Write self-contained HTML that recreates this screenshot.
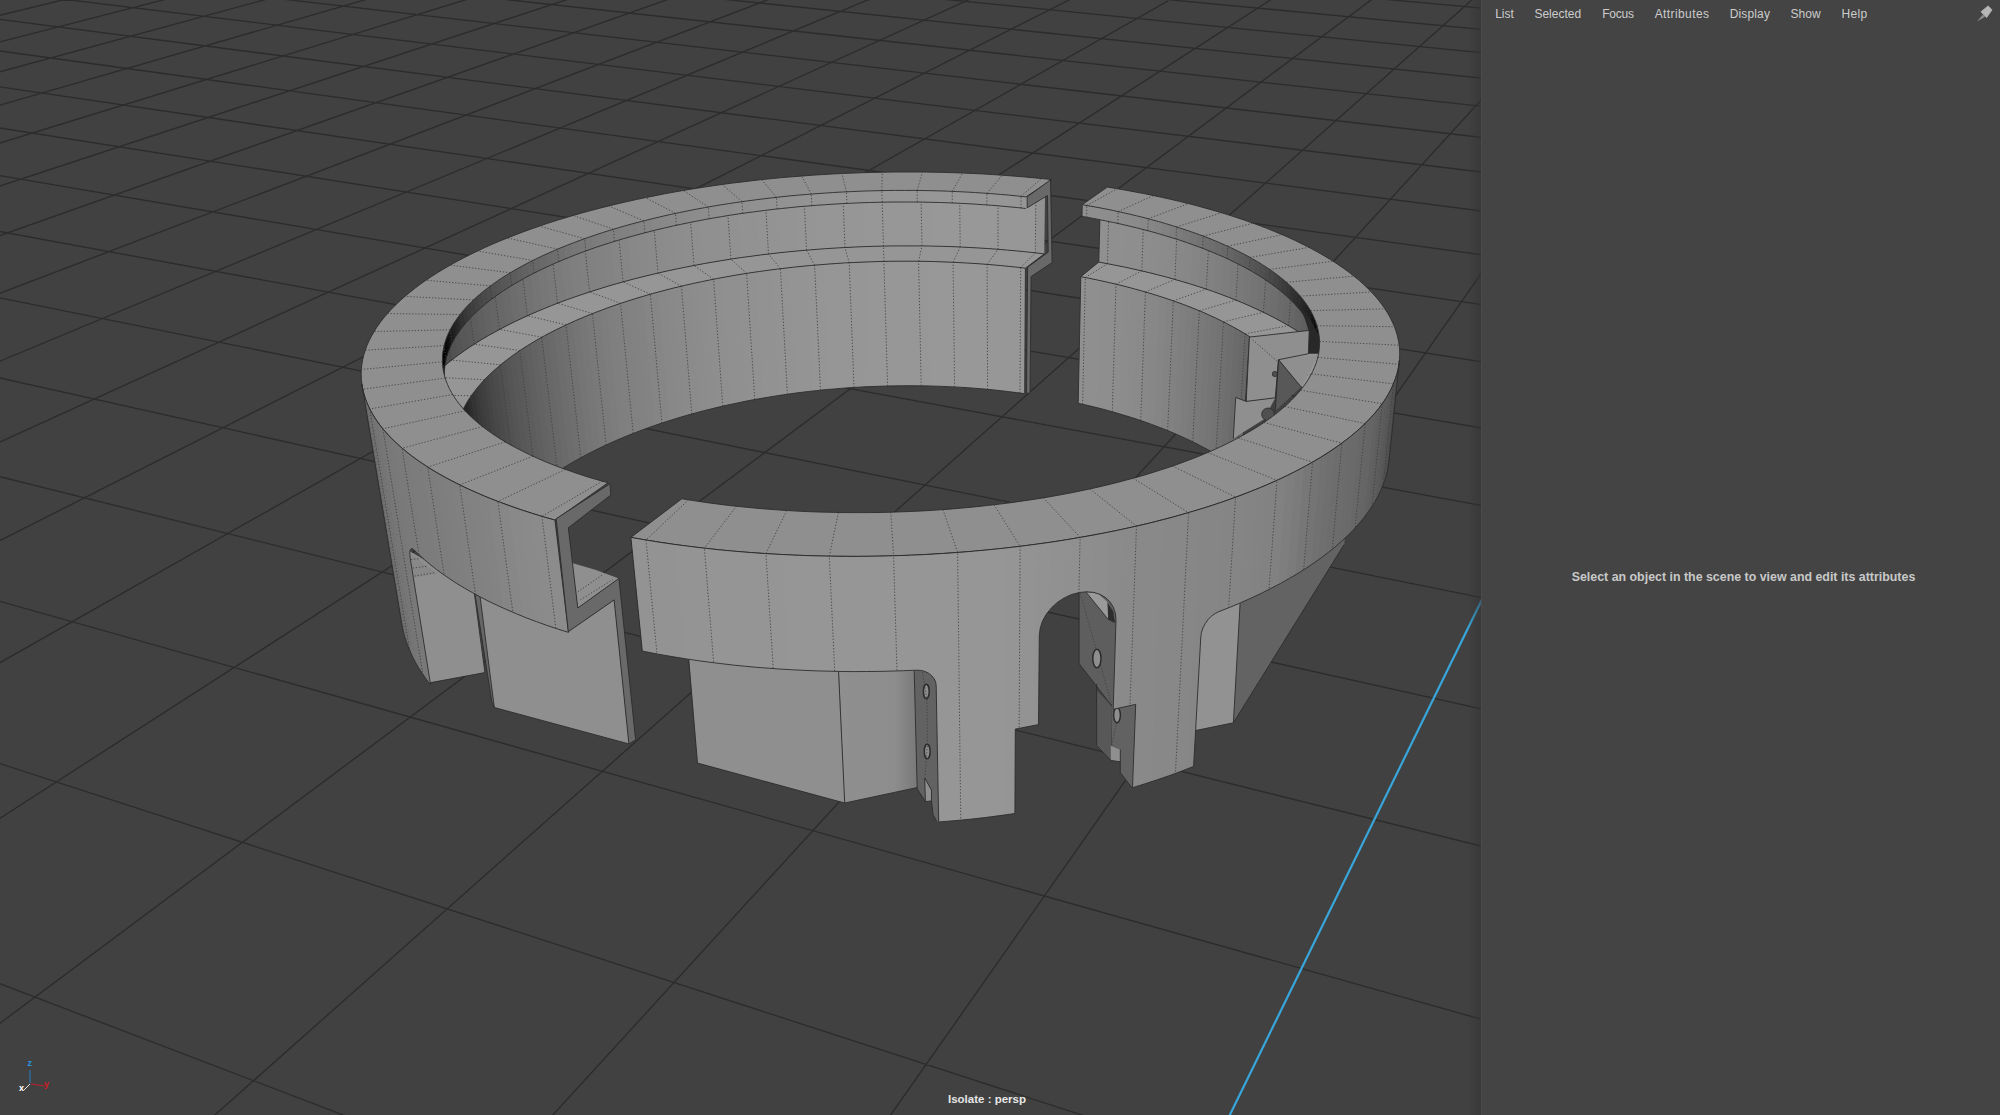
<!DOCTYPE html>
<html><head><meta charset="utf-8"><title>Maya</title>
<style>
html,body{margin:0;padding:0;background:#444;}
body{width:2000px;height:1115px;position:relative;overflow:hidden;font-family:"Liberation Sans",sans-serif;}
#vp{position:absolute;left:0;top:0;width:2000px;height:1115px;background:#414141;}
#panel{position:absolute;left:1481px;top:0;width:519px;height:1115px;background:#444444;border-left:1px solid #4b4b4b;box-sizing:border-box;}
#shade{position:absolute;left:1467px;top:0;width:14px;height:1115px;background:linear-gradient(to right,rgba(50,50,50,0),rgba(50,50,50,0.55));}
#menu{position:absolute;left:-1px;top:7px;height:18px;font-size:12px;color:#cccccc;white-space:nowrap;}
#menu span{position:absolute;top:0;}
#msg{position:absolute;left:2px;width:519px;top:570px;text-align:center;font-size:12.4px;font-weight:bold;color:#c8c8c8;}
#iso{position:absolute;left:948px;top:1093px;font-size:11.5px;font-weight:bold;color:#e6e6e6;}
.e{fill:none;stroke:#2c2c2c;stroke-width:.9}
.d{fill:none;stroke:#404040;stroke-opacity:.85;stroke-width:1;stroke-dasharray:1.3 1.8}
</style></head><body>
<svg id="vp" width="2000" height="1115" viewBox="0 0 2000 1115">
<g stroke="#2c2c2c" stroke-width="1.35" fill="none">
<path d="M-52.2,-39.5 L16.8,-54 M-64.6,-16.4 L108.7,-54.6 M-78.4,9.3 L200.3,-55.3 M-51.8,27.9 L291.6,-55.9 M-66.2,58.9 L382.7,-56.5 M-82.5,94.1 L447.7,-50 M-51.2,119.9 L539.8,-50.6 M-68.4,164 L631.7,-51.3 M-88.4,215.1 L723.4,-51.9 M-50.4,253.4 L814.7,-52.5 M-71.7,320.7 L905.9,-53.1 M-97.5,401.7 L996.7,-53.7 M-129.1,501 L1087.3,-54.4 M-77.2,579.6 L1177.7,-55 M-113.3,726.8 L1267.8,-55.6 M-161.1,922 L1357.6,-56.2 M-88,1088.9 L1447.2,-56.8 M137.5,1183.6 L1528.6,-50.3 M498.5,1174.4 L1619.2,-51 M855.4,1165.2 L1709.5,-51.6 M1526.5,1259.4 L1889.5,-52.8 M1895.9,1249.2 L1979,-53.4 M-65.6,958.6 L498.5,1174.4 M-113.3,726.8 L1362.6,1206.2 M-77.2,579.6 L2076.5,1187.2 M-112.4,448.7 L2068.2,992.5 M-84,359.2 L2061.7,838.6 M-60.6,285.6 L2056.4,714 M-88.4,215.1 L2052,611 M-68.4,164 L2157.3,543 M-51.2,119.9 L2145.9,466.5 M-74.1,76 L2136.1,400.8 M-58.8,42.9 L2127.6,343.6 M-78.4,9.3 L2120.1,293.5 M-64.6,-16.4 L2113.5,249.1 M-52.2,-39.5 L2107.6,209.6 M46.3,-50.8 L2102.4,174.2 M231.2,-52 L2097.6,142.3 M447.7,-50 L2093.3,113.4 M631.7,-51.3 L2089.4,87.1 M814.7,-52.5 L2085.8,63 M1033.9,-50.5 L2082.5,40.9 M1216.2,-51.7 L2079.5,20.6 M1397.4,-53 L2076.7,1.8 M1619.2,-51 L2074.1,-15.6 M1799.6,-52.2 L2071.7,-31.8"/>
</g>
<path d="M1152.8,1269.7 L1799.6,-52.2" stroke="#38a6da" stroke-width="2.2" fill="none" transform="translate(1.3,0)"/>
<defs><linearGradient id="gf2" gradientUnits="userSpaceOnUse" x1="840" y1="0" x2="918" y2="0"><stop offset="0" stop-color="#8f8f8f"/><stop offset="0.7" stop-color="#8d8d8d"/><stop offset="1" stop-color="#787878"/></linearGradient></defs>
<g id="model">
<polygon points="1024.7,393.7 1018.6,392.8 1019.2,267.5 1025.4,268.2" fill="#979797"/>
<polygon points="1020,393 1010.5,391.8 1010.9,266.6 1020.7,267.6" fill="#979797"/>
<polygon points="1012,392 1002.4,390.9 1002.5,265.7 1012.3,266.7" fill="#979797"/>
<polygon points="1003.9,391 994.3,390 994.1,265 1004,265.9" fill="#979797"/>
<polygon points="995.7,390.1 986.1,389.2 985.6,264.3 995.6,265.1" fill="#979797"/>
<polygon points="987.6,389.3 977.9,388.5 977.2,263.6 987.1,264.4" fill="#989898"/>
<polygon points="979.4,388.6 969.7,387.9 968.6,263.1 978.7,263.7" fill="#989898"/>
<polygon points="971.1,388 961.4,387.3 960.1,262.6 970.2,263.2" fill="#989898"/>
<polygon points="962.9,387.4 953.1,386.9 951.5,262.2 961.6,262.7" fill="#989898"/>
<polygon points="954.6,386.9 944.8,386.5 942.9,261.9 953.1,262.3" fill="#989898"/>
<polygon points="946.2,386.5 936.4,386.2 934.3,261.6 944.5,261.9" fill="#989898"/>
<polygon points="937.9,386.2 928.1,385.9 925.7,261.4 935.9,261.6" fill="#989898"/>
<polygon points="929.6,386 919.7,385.8 917.1,261.3 927.2,261.4" fill="#979797"/>
<polygon points="921.2,385.8 911.3,385.7 908.4,261.2 918.6,261.3" fill="#979797"/>
<polygon points="912.8,385.7 902.9,385.8 899.7,261.2 909.9,261.2" fill="#979797"/>
<polygon points="904.4,385.7 894.5,385.8 891.1,261.3 901.3,261.2" fill="#979797"/>
<polygon points="896,385.8 886.1,386 882.4,261.5 892.6,261.3" fill="#979797"/>
<polygon points="887.6,386 877.7,386.3 873.7,261.7 883.9,261.4" fill="#979797"/>
<polygon points="879.2,386.2 869.3,386.6 865,262 875.2,261.6" fill="#979797"/>
<polygon points="870.8,386.6 860.9,387 856.3,262.4 866.6,261.9" fill="#969696"/>
<polygon points="862.4,387 852.5,387.5 847.7,262.8 857.9,262.3" fill="#969696"/>
<polygon points="854,387.4 844.1,388.1 839,263.3 849.2,262.7" fill="#969696"/>
<polygon points="845.6,388 835.7,388.8 830.4,263.9 840.6,263.2" fill="#969696"/>
<polygon points="837.2,388.7 827.4,389.5 821.7,264.6 831.9,263.8" fill="#969696"/>
<polygon points="828.9,389.4 819,390.3 813.1,265.3 823.3,264.4" fill="#959595"/>
<polygon points="820.5,390.2 810.7,391.2 804.5,266.1 814.6,265.1" fill="#959595"/>
<polygon points="812.2,391.1 802.4,392.2 795.9,266.9 806,265.9" fill="#949494"/>
<polygon points="803.9,392 794.2,393.3 787.4,267.9 797.5,266.8" fill="#949494"/>
<polygon points="795.6,393.1 785.9,394.4 778.9,268.9 788.9,267.7" fill="#939393"/>
<polygon points="787.4,394.2 777.7,395.6 770.4,270 780.4,268.7" fill="#939393"/>
<polygon points="779.2,395.4 769.6,397 761.9,271.1 771.9,269.8" fill="#929292"/>
<polygon points="771,396.7 761.4,398.3 753.5,272.3 763.4,270.9" fill="#929292"/>
<polygon points="762.9,398.1 753.3,399.8 745.2,273.6 755,272.1" fill="#919191"/>
<polygon points="754.8,399.5 745.3,401.3 736.8,275 746.6,273.4" fill="#919191"/>
<polygon points="746.7,401.1 737.3,403 728.6,276.4 738.3,274.7" fill="#909090"/>
<polygon points="738.7,402.7 729.3,404.7 720.3,277.9 730,276.2" fill="#909090"/>
<polygon points="730.7,404.3 721.4,406.4 712.1,279.5 721.8,277.7" fill="#8f8f8f"/>
<polygon points="722.8,406.1 713.6,408.3 704,281.1 713.6,279.2" fill="#8e8e8e"/>
<polygon points="715,408 705.8,410.2 696,282.9 705.5,280.8" fill="#8d8d8d"/>
<polygon points="707.2,409.9 698.1,412.2 688,284.6 697.4,282.5" fill="#8c8c8c"/>
<polygon points="699.5,411.9 690.4,414.3 680,286.5 689.4,284.3" fill="#8b8b8b"/>
<polygon points="691.8,414 682.9,416.5 672.2,288.4 681.4,286.2" fill="#8a8a8a"/>
<polygon points="684.2,416.1 675.3,418.8 664.4,290.4 673.5,288.1" fill="#898989"/>
<polygon points="676.7,418.4 667.9,421.1 656.6,292.5 665.7,290" fill="#888888"/>
<polygon points="669.2,420.7 660.6,423.5 649,294.6 658,292.1" fill="#868686"/>
<polygon points="661.9,423.1 653.3,426 641.5,296.8 650.4,294.2" fill="#858585"/>
<polygon points="654.6,425.5 646.1,428.5 634,299.1 642.8,296.4" fill="#838383"/>
<polygon points="647.4,428.1 639,431.2 626.6,301.4 635.3,298.7" fill="#828282"/>
<polygon points="640.3,430.7 632,433.9 619.3,303.8 627.9,301" fill="#818181"/>
<polygon points="633.2,433.4 625.1,436.7 612.2,306.3 620.6,303.4" fill="#808080"/>
<polygon points="626.3,436.2 618.3,439.5 605.1,308.8 613.4,305.8" fill="#7f7f7f"/>
<polygon points="619.5,439 611.6,442.5 598.1,311.4 606.3,308.4" fill="#7d7d7d"/>
<polygon points="612.8,442 605,445.5 591.2,314.1 599.3,311" fill="#7b7b7b"/>
<polygon points="606.2,445 598.5,448.6 584.5,316.8 592.5,313.6" fill="#797979"/>
<polygon points="599.7,448 592.2,451.7 577.9,319.6 585.7,316.3" fill="#777777"/>
<polygon points="593.3,451.2 585.9,455 571.4,322.5 579,319.1" fill="#757575"/>
<polygon points="587,454.4 579.8,458.3 565,325.4 572.5,322" fill="#727272"/>
<polygon points="580.9,457.7 573.8,461.7 558.7,328.4 566.1,324.9" fill="#6f6f6f"/>
<polygon points="574.9,461.1 568,465.1 552.6,331.5 559.8,327.9" fill="#6d6d6d"/>
<polygon points="569,464.5 562.3,468.6 546.6,334.6 553.7,330.9" fill="#6a6a6a"/>
<polygon points="563.3,468 556.7,472.2 540.8,337.8 547.7,334.1" fill="#686868"/>
<polygon points="557.7,471.6 551.3,475.9 535.1,341.1 541.8,337.2" fill="#656565"/>
<polygon points="552.2,475.2 546,479.6 529.6,344.4 536.1,340.5" fill="#636363"/>
<polygon points="546.9,478.9 540.9,483.4 524.2,347.7 530.6,343.8" fill="#606060"/>
<polygon points="541.8,482.7 535.9,487.2 519,351.1 525.2,347.1" fill="#5d5d5d"/>
<polygon points="536.8,486.5 531.1,491.1 513.9,354.6 519.9,350.5" fill="#5a5a5a"/>
<polygon points="532,490.4 526.5,495.1 509.1,358.2 514.8,354" fill="#585858"/>
<polygon points="527.3,494.4 522,499.1 504.4,361.8 509.9,357.5" fill="#555555"/>
<polygon points="522.8,498.4 517.7,503.2 499.9,365.4 505.2,361.1" fill="#525252"/>
<polygon points="518.5,502.5 513.6,507.4 495.5,369.1 500.6,364.8" fill="#4e4e4e"/>
<polygon points="514.4,506.6 509.7,511.6 491.4,372.9 496.3,368.5" fill="#4b4b4b"/>
<polygon points="510.4,510.9 506,515.9 487.4,376.7 492.1,372.2" fill="#484848"/>
<polygon points="506.7,515.1 502.5,520.2 483.7,380.5 488.1,376" fill="#444444"/>
<polygon points="503.1,519.4 499.1,524.6 480.1,384.4 484.3,379.8" fill="#404040"/>
<polygon points="499.7,523.8 496,529 476.8,388.4 480.7,383.7" fill="#3d3d3d"/>
<polygon points="496.5,528.2 493.1,533.5 473.7,392.4 477.4,387.7" fill="#393939"/>
<polygon points="493.6,532.7 490.4,538 470.8,396.4 474.2,391.7" fill="#333333"/>
<polygon points="490.8,537.2 487.9,542.5 468.1,400.5 471.3,395.7" fill="#2e2e2e"/>
<polygon points="488.3,541.7 485.6,547.1 465.6,404.6 468.5,399.7" fill="#282828"/>
<polygon points="486,546.3 483.6,551.8 463.4,408.7 466.1,403.9" fill="#232323"/>
<polygon points="483.9,551 481.8,556.5 461.4,412.9 463.8,408" fill="#1d1d1d"/>
<polygon points="482.1,555.6 480.2,561.2 459.7,417.1 461.8,412.2" fill="#171717"/>
<polygon points="480.4,560.4 478.8,565.9 458.2,421.4 460,416.4" fill="#111111"/>
<polygon points="479.1,565.1 477.7,570.7 457,425.7 458.5,420.6" fill="#0b0b0b"/>
<polygon points="477.9,569.9 476.9,575.5 456,430 457.2,424.9" fill="#070707"/>
<polygon points="477,574.7 476.3,580.4 455.3,434.3 456.1,429.2" fill="#040404"/>
<polygon points="476.4,579.5 475.9,585.2 454.8,438.7 455.4,433.5" fill="#000000"/>
<polygon points="476,584.4 475.9,590.1 454.6,443 454.9,437.9" fill="#000000"/>
<polygon points="475.9,589.2 476,595 454.7,447.4 454.6,442.3" fill="#000000"/>
<polygon points="476,594.1 476.5,599.9 455.1,451.8 454.7,446.6" fill="#000000"/>
<polygon points="476.4,599 477.2,604.8 455.7,456.2 455,451" fill="#000000"/>
<polygon points="477.1,603.9 477.6,606.8 456,458 455.6,455.4" fill="#000000"/>
<polyline class="d" points="1020,393 1020.7,267.6"/>
<polyline class="d" points="987.6,389.3 987.1,264.4"/>
<polyline class="d" points="954.6,386.9 953.1,262.3"/>
<polyline class="d" points="921.2,385.8 918.6,261.3"/>
<polyline class="d" points="887.6,386 883.9,261.4"/>
<polyline class="d" points="854,387.4 849.2,262.7"/>
<polyline class="d" points="820.5,390.2 814.6,265.1"/>
<polyline class="d" points="787.4,394.2 780.4,268.7"/>
<polyline class="d" points="754.8,399.5 746.6,273.4"/>
<polyline class="d" points="722.8,406.1 713.6,279.2"/>
<polyline class="d" points="691.8,414 681.4,286.2"/>
<polyline class="d" points="661.9,423.1 650.4,294.2"/>
<polyline class="d" points="633.2,433.4 620.6,303.4"/>
<polyline class="d" points="606.2,445 592.5,313.6"/>
<polyline class="d" points="580.9,457.7 566.1,324.9"/>
<polyline class="d" points="557.7,471.6 541.8,337.2"/>
<polyline class="d" points="536.8,486.5 519.9,350.5"/>
<polyline class="d" points="518.5,502.5 500.6,364.8"/>
<polyline class="d" points="503.1,519.4 484.3,379.8"/>
<polyline class="d" points="490.8,537.2 471.3,395.7"/>
<polyline class="d" points="482.1,555.6 461.8,412.2"/>
<polyline class="d" points="477,574.7 456.1,429.2"/>
<polyline class="d" points="476,594.1 454.7,446.6"/>
<polyline class="e" points="1024.7,393.7 1016.6,392.6 1008.5,391.6 1000.4,390.6 992.2,389.8 984,389 975.8,388.3 967.5,387.7 959.2,387.2 950.9,386.8 942.6,386.4 934.2,386.1 925.8,385.9 917.5,385.8 909,385.7 900.6,385.8 892.2,385.9 883.8,386.1 875.4,386.4 867,386.7 858.5,387.2 850.1,387.7 841.7,388.3 833.4,389 825,389.7 816.7,390.6 808.3,391.5 800,392.5 791.8,393.6 783.5,394.8 775.3,396 767.1,397.4 759,398.8 750.9,400.2 742.9,401.8 734.9,403.5 726.9,405.2 719,407 711.2,408.9 703.4,410.8 695.7,412.9 688,415 680.5,417.2 673,419.5 665.5,421.9 658.2,424.3 651,426.8 643.8,429.4 636.7,432.1 629.7,434.8 622.8,437.6 616.1,440.5 609.4,443.5 602.8,446.5 596.4,449.6 590.1,452.8 583.9,456.1 577.8,459.4 571.8,462.8 566,466.3 560.3,469.9 554.8,473.5 549.4,477.2 544.2,480.9 539.1,484.7 534.2,488.6 529.5,492.5 524.9,496.5 520.5,500.6 516.2,504.7 512.2,508.9 508.3,513.2 504.7,517.5 501.2,521.8 498,526.2 494.9,530.7 492,535.1 489.4,539.7 487,544.3 484.8,548.9 482.9,553.6 481.1,558.3 479.6,563 478.4,567.8 477.4,572.6 476.6,577.4 476.1,582.3 475.9,587.1 475.9,592 476.2,596.9 476.7,601.8 477.6,606.8"/>
<polygon points="1241,470.9 1235.8,467.2 1244.2,333.3 1249.6,336.6" fill="#666666"/>
<polygon points="1236.7,467.8 1230.8,463.7 1239,330.2 1245.1,333.9" fill="#696969"/>
<polygon points="1231.7,464.3 1225.6,460.3 1233.6,327.2 1239.9,330.8" fill="#6b6b6b"/>
<polygon points="1226.6,460.9 1220.3,456.9 1228,324.2 1234.6,327.7" fill="#6e6e6e"/>
<polygon points="1221.3,457.5 1214.8,453.6 1222.3,321.3 1229,324.7" fill="#707070"/>
<polygon points="1215.8,454.2 1209.2,450.4 1216.5,318.5 1223.4,321.8" fill="#737373"/>
<polygon points="1210.2,451 1203.5,447.3 1210.5,315.7 1217.6,319" fill="#757575"/>
<polygon points="1204.5,447.9 1197.6,444.2 1204.4,313 1211.6,316.2" fill="#777777"/>
<polygon points="1198.7,444.8 1191.6,441.3 1198.2,310.3 1205.5,313.4" fill="#797979"/>
<polygon points="1192.7,441.8 1185.5,438.4 1191.8,307.7 1199.3,310.8" fill="#7b7b7b"/>
<polygon points="1186.6,438.9 1179.2,435.5 1185.4,305.2 1193,308.2" fill="#7d7d7d"/>
<polygon points="1180.3,436 1172.9,432.8 1178.8,302.8 1186.5,305.7" fill="#7f7f7f"/>
<polygon points="1174,433.2 1166.4,430.1 1172.1,300.4 1179.9,303.2" fill="#818181"/>
<polygon points="1167.6,430.5 1159.8,427.5 1165.2,298.1 1173.3,300.8" fill="#838383"/>
<polygon points="1161,427.9 1153.1,424.9 1158.3,295.9 1166.5,298.5" fill="#858585"/>
<polygon points="1154.3,425.4 1146.3,422.5 1151.3,293.7 1159.5,296.3" fill="#878787"/>
<polygon points="1147.6,422.9 1139.5,420.1 1144.1,291.6 1152.5,294.1" fill="#888888"/>
<polygon points="1140.7,420.5 1132.5,417.8 1136.9,289.6 1145.4,292" fill="#8a8a8a"/>
<polygon points="1133.7,418.2 1125.4,415.6 1129.6,287.6 1138.2,289.9" fill="#8b8b8b"/>
<polygon points="1126.7,416 1118.2,413.5 1122.2,285.7 1130.9,287.9" fill="#8c8c8c"/>
<polygon points="1119.5,413.8 1111,411.4 1114.7,283.9 1123.5,286" fill="#8d8d8d"/>
<polygon points="1112.3,411.8 1103.7,409.4 1107.1,282.1 1116,284.2" fill="#8e8e8e"/>
<polygon points="1105,409.8 1096.3,407.5 1099.4,280.4 1108.5,282.4" fill="#8e8e8e"/>
<polygon points="1097.6,407.8 1088.8,405.7 1091.7,278.8 1100.8,280.7" fill="#8f8f8f"/>
<polygon points="1090.1,406 1081.2,403.9 1083.9,277.3 1093.1,279.1" fill="#8f8f8f"/>
<polygon points="1082.6,404.2 1078.2,403.3 1080.8,276.7 1085.3,277.6" fill="#909090"/>
<polyline class="d" points="1236.7,467.8 1245.1,333.9"/>
<polyline class="d" points="1215.8,454.2 1223.4,321.8"/>
<polyline class="d" points="1192.7,441.8 1199.3,310.8"/>
<polyline class="d" points="1167.6,430.5 1173.3,300.8"/>
<polyline class="d" points="1140.7,420.5 1145.4,292"/>
<polyline class="d" points="1112.3,411.8 1116,284.2"/>
<polyline class="d" points="1082.6,404.2 1085.3,277.6"/>
<polyline class="e" points="1241,470.9 1236,467.3 1230.9,463.7 1225.6,460.2 1220.2,456.8 1214.6,453.5 1208.9,450.2 1203,447.1 1197,444 1190.9,440.9 1184.7,438 1178.3,435.1 1171.8,432.3 1165.2,429.6 1158.5,427 1151.6,424.4 1144.7,421.9 1137.7,419.5 1130.5,417.2 1123.3,415 1116,412.8 1108.6,410.7 1101.1,408.7 1093.6,406.8 1085.9,405 1078.2,403.3"/>
<polyline class="e" points="1024.7,393.7 1025.4,268.2"/>
<polyline class="e" points="1078.2,403.3 1080.8,276.7"/>
<polyline class="e" points="1241,470.9 1249.6,336.6"/>
<polygon points="1025.4,268.2 1017.1,267.2 1008.8,266.4 1000.4,265.5 992,264.8 983.5,264.1 975,263.5 966.5,263 957.9,262.5 949.3,262.1 940.7,261.8 932.1,261.5 923.4,261.3 914.7,261.2 906.1,261.2 897.4,261.2 888.7,261.3 880,261.5 871.3,261.8 862.6,262.1 853.9,262.5 845.2,262.9 836.6,263.5 827.9,264.1 819.3,264.8 810.6,265.5 802,266.3 793.5,267.2 784.9,268.2 776.4,269.2 767.9,270.3 759.4,271.5 751,272.7 742.6,274 734.3,275.4 726,276.9 717.8,278.4 709.6,280 701.5,281.7 693.5,283.4 685.5,285.2 677.5,287.1 669.7,289 661.9,291.1 654.2,293.1 646.6,295.3 639,297.5 631.6,299.8 624.2,302.2 617,304.6 609.8,307.1 602.8,309.7 595.8,312.3 589,315 582.2,317.8 575.6,320.6 569.2,323.5 562.8,326.5 556.6,329.5 550.5,332.6 544.6,335.7 538.8,338.9 533.2,342.2 527.7,345.5 522.3,348.9 517.2,352.4 512.2,355.9 507.4,359.5 502.7,363.1 498.3,366.8 494,370.5 489.9,374.3 486,378.1 482.3,382 478.9,385.9 475.6,389.9 472.6,393.9 469.7,397.9 467.1,402 464.8,406.2 462.6,410.3 460.7,414.5 459.1,418.8 457.7,423 456.6,427.3 455.7,431.7 455,436 454.7,440.4 454.6,444.8 454.8,449.2 455.3,453.6 456,458 394.4,466 393.9,461 393.7,455.9 393.8,450.9 394.2,445.9 394.9,440.9 396,436 397.3,431.1 398.9,426.2 400.7,421.4 402.9,416.6 405.3,411.8 408,407.1 410.9,402.5 414.1,397.9 417.6,393.3 421.3,388.8 425.2,384.3 429.3,379.9 433.7,375.6 438.3,371.3 443.1,367.1 448.1,362.9 453.3,358.8 458.7,354.8 464.3,350.8 470,346.9 476,343.1 482.1,339.3 488.4,335.6 494.9,332 501.5,328.4 508.2,324.9 515.1,321.5 522.2,318.2 529.4,314.9 536.7,311.7 544.2,308.6 551.7,305.5 559.4,302.5 567.3,299.6 575.2,296.8 583.2,294.1 591.3,291.4 599.6,288.8 607.9,286.2 616.3,283.8 624.8,281.4 633.4,279.1 642,276.9 650.8,274.8 659.6,272.7 668.5,270.7 677.4,268.8 686.4,267 695.5,265.2 704.6,263.5 713.8,261.9 723,260.4 732.2,258.9 741.5,257.5 750.9,256.3 760.2,255 769.7,253.9 779.1,252.8 788.6,251.8 798,250.9 807.6,250.1 817.1,249.3 826.6,248.6 836.2,248 845.8,247.5 855.3,247 864.9,246.6 874.5,246.3 884.1,246.1 893.7,245.9 903.2,245.9 912.8,245.9 922.4,245.9 931.9,246.1 941.4,246.3 950.9,246.6 960.4,247 969.9,247.5 979.3,248 988.7,248.6 998.1,249.3 1007.4,250.1 1016.7,250.9 1026,251.8 1035.2,252.8 1044.3,253.9" fill="#969696"/>
<polyline class="d" points="1020.7,267.6 1035.3,252.9"/>
<polyline class="d" points="987.1,264.4 998,249.3"/>
<polyline class="d" points="953.1,262.3 960.2,247"/>
<polyline class="d" points="918.6,261.3 922,245.9"/>
<polyline class="d" points="883.9,261.4 883.5,246.1"/>
<polyline class="d" points="849.2,262.7 845,247.5"/>
<polyline class="d" points="814.6,265.1 806.6,250.1"/>
<polyline class="d" points="780.4,268.7 768.5,254"/>
<polyline class="d" points="746.6,273.4 730.9,259.1"/>
<polyline class="d" points="713.6,279.2 694,265.5"/>
<polyline class="d" points="681.4,286.2 658,273.1"/>
<polyline class="d" points="650.4,294.2 623.1,281.9"/>
<polyline class="d" points="620.6,303.4 589.6,291.9"/>
<polyline class="d" points="592.5,313.6 557.6,303.2"/>
<polyline class="d" points="566.1,324.9 527.5,315.7"/>
<polyline class="d" points="541.8,337.2 499.6,329.4"/>
<polyline class="d" points="519.9,350.5 474.2,344.2"/>
<polyline class="d" points="500.6,364.8 451.6,360.1"/>
<polyline class="d" points="484.3,379.8 432.2,377"/>
<polyline class="d" points="471.3,395.7 416.3,394.9"/>
<polyline class="d" points="461.8,412.2 404.4,413.6"/>
<polyline class="d" points="456.1,429.2 396.7,433"/>
<polyline class="d" points="454.7,446.6 393.7,453"/>
<polyline class="e" points="1025.4,268.2 1017.1,267.2 1008.8,266.4 1000.4,265.5 992,264.8 983.5,264.1 975,263.5 966.5,263 957.9,262.5 949.3,262.1 940.7,261.8 932.1,261.5 923.4,261.3 914.7,261.2 906.1,261.2 897.4,261.2 888.7,261.3 880,261.5 871.3,261.8 862.6,262.1 853.9,262.5 845.2,262.9 836.6,263.5 827.9,264.1 819.3,264.8 810.6,265.5 802,266.3 793.5,267.2 784.9,268.2 776.4,269.2 767.9,270.3 759.4,271.5 751,272.7 742.6,274 734.3,275.4 726,276.9 717.8,278.4 709.6,280 701.5,281.7 693.5,283.4 685.5,285.2 677.5,287.1 669.7,289 661.9,291.1 654.2,293.1 646.6,295.3 639,297.5 631.6,299.8 624.2,302.2 617,304.6 609.8,307.1 602.8,309.7 595.8,312.3 589,315 582.2,317.8 575.6,320.6 569.2,323.5 562.8,326.5 556.6,329.5 550.5,332.6 544.6,335.7 538.8,338.9 533.2,342.2 527.7,345.5 522.3,348.9 517.2,352.4 512.2,355.9 507.4,359.5 502.7,363.1 498.3,366.8 494,370.5 489.9,374.3 486,378.1 482.3,382 478.9,385.9 475.6,389.9 472.6,393.9 469.7,397.9 467.1,402 464.8,406.2 462.6,410.3 460.7,414.5 459.1,418.8 457.7,423 456.6,427.3 455.7,431.7 455,436 454.7,440.4 454.6,444.8 454.8,449.2 455.3,453.6 456,458"/>
<polygon points="1044.3,253.9 1033.7,252.7 1034.2,194 1045,195.2" fill="#929292"/>
<polygon points="1035.3,252.9 1024.4,251.7 1024.8,193.1 1035.8,194.2" fill="#979797"/>
<polygon points="1026.1,251.9 1015.1,250.8 1015.3,192.2 1026.4,193.2" fill="#979797"/>
<polygon points="1016.8,250.9 1005.8,249.9 1005.8,191.5 1017,192.4" fill="#979797"/>
<polygon points="1007.4,250.1 996.4,249.2 996.3,190.8 1007.5,191.6" fill="#979797"/>
<polygon points="998,249.3 986.9,248.5 986.7,190.1 998,190.9" fill="#989898"/>
<polygon points="988.6,248.6 977.5,247.9 977.2,189.6 988.4,190.2" fill="#989898"/>
<polygon points="979.2,248 968,247.4 967.5,189.1 978.9,189.7" fill="#989898"/>
<polygon points="969.7,247.5 958.5,246.9 957.9,188.7 969.2,189.2" fill="#989898"/>
<polygon points="960.2,247 949,246.6 948.2,188.3 959.6,188.7" fill="#989898"/>
<polygon points="950.7,246.6 939.4,246.3 938.5,188 949.9,188.4" fill="#989898"/>
<polygon points="941.1,246.3 929.8,246.1 928.8,187.8 940.2,188.1" fill="#989898"/>
<polygon points="931.5,246.1 920.2,245.9 919.1,187.7 930.5,187.9" fill="#979797"/>
<polygon points="922,245.9 910.6,245.9 909.3,187.7 920.8,187.7" fill="#979797"/>
<polygon points="912.4,245.9 901,245.9 899.6,187.7 911.1,187.7" fill="#979797"/>
<polygon points="902.7,245.9 891.4,246 889.8,187.8 901.3,187.7" fill="#979797"/>
<polygon points="893.1,245.9 881.8,246.1 880,187.9 891.5,187.7" fill="#979797"/>
<polygon points="883.5,246.1 872.2,246.4 870.3,188.2 881.8,187.9" fill="#979797"/>
<polygon points="873.9,246.3 862.5,246.7 860.5,188.5 872,188.1" fill="#979797"/>
<polygon points="864.2,246.7 852.9,247.1 850.7,188.8 862.2,188.4" fill="#969696"/>
<polygon points="854.6,247 843.3,247.6 841,189.3 852.5,188.8" fill="#969696"/>
<polygon points="845,247.5 833.7,248.2 831.2,189.8 842.7,189.2" fill="#969696"/>
<polygon points="835.4,248 824.1,248.8 821.5,190.4 832.9,189.7" fill="#969696"/>
<polygon points="825.8,248.7 814.5,249.5 811.7,191.1 823.2,190.3" fill="#969696"/>
<polygon points="816.2,249.4 804.9,250.3 802,191.8 813.5,190.9" fill="#959595"/>
<polygon points="806.6,250.1 795.4,251.2 792.3,192.6 803.7,191.7" fill="#959595"/>
<polygon points="797,251 785.8,252.1 782.6,193.5 794,192.4" fill="#949494"/>
<polygon points="787.5,251.9 776.3,253.1 773,194.4 784.4,193.3" fill="#949494"/>
<polygon points="778,252.9 766.8,254.2 763.4,195.5 774.7,194.3" fill="#939393"/>
<polygon points="768.5,254 757.4,255.4 753.8,196.5 765.1,195.3" fill="#939393"/>
<polygon points="759.1,255.2 748,256.6 744.2,197.7 755.5,196.3" fill="#929292"/>
<polygon points="749.7,256.4 738.6,258 734.7,199 745.9,197.5" fill="#929292"/>
<polygon points="740.3,257.7 729.3,259.4 725.2,200.3 736.4,198.7" fill="#919191"/>
<polygon points="730.9,259.1 720,260.9 715.8,201.7 726.9,200" fill="#919191"/>
<polygon points="721.6,260.6 710.7,262.4 706.4,203.1 717.5,201.4" fill="#909090"/>
<polygon points="712.4,262.1 701.6,264.1 697.1,204.6 708.1,202.9" fill="#909090"/>
<polygon points="703.2,263.8 692.4,265.8 687.8,206.2 698.7,204.4" fill="#8f8f8f"/>
<polygon points="694,265.5 683.3,267.6 678.5,207.9 689.4,206" fill="#8e8e8e"/>
<polygon points="684.9,267.3 674.3,269.5 669.4,209.7 680.2,207.6" fill="#8d8d8d"/>
<polygon points="675.9,269.1 665.3,271.4 660.3,211.5 671,209.4" fill="#8c8c8c"/>
<polygon points="666.9,271 656.4,273.4 651.2,213.4 661.9,211.2" fill="#8b8b8b"/>
<polygon points="658,273.1 647.6,275.5 642.2,215.4 652.8,213" fill="#8a8a8a"/>
<polygon points="649.2,275.2 638.9,277.7 633.3,217.4 643.8,215" fill="#898989"/>
<polygon points="640.4,277.3 630.2,280 624.5,219.5 634.9,217" fill="#888888"/>
<polygon points="631.7,279.6 621.6,282.3 615.8,221.7 626.1,219.1" fill="#868686"/>
<polygon points="623.1,281.9 613.1,284.7 607.1,223.9 617.3,221.3" fill="#858585"/>
<polygon points="614.6,284.3 604.7,287.2 598.5,226.3 608.6,223.5" fill="#838383"/>
<polygon points="606.2,286.8 596.3,289.8 590.1,228.7 600.1,225.8" fill="#828282"/>
<polygon points="597.8,289.3 588.1,292.4 581.7,231.1 591.6,228.2" fill="#818181"/>
<polygon points="589.6,291.9 580,295.1 573.4,233.7 583.2,230.7" fill="#808080"/>
<polygon points="581.4,294.7 572,297.9 565.2,236.3 574.9,233.2" fill="#7f7f7f"/>
<polygon points="573.4,297.4 564,300.8 557.2,239 566.7,235.8" fill="#7d7d7d"/>
<polygon points="565.4,300.3 556.2,303.8 549.2,241.7 558.6,238.5" fill="#7b7b7b"/>
<polygon points="557.6,303.2 548.6,306.8 541.4,244.5 550.6,241.2" fill="#797979"/>
<polygon points="549.9,306.2 541,309.9 533.7,247.4 542.8,244" fill="#777777"/>
<polygon points="542.3,309.3 533.6,313.1 526.1,250.4 535,246.9" fill="#757575"/>
<polygon points="534.9,312.5 526.3,316.3 518.6,253.4 527.4,249.9" fill="#727272"/>
<polygon points="527.5,315.7 519.1,319.6 511.3,256.5 519.9,252.9" fill="#6f6f6f"/>
<polygon points="520.4,319 512.1,323 504.1,259.7 512.6,256" fill="#6d6d6d"/>
<polygon points="513.3,322.4 505.2,326.5 497.1,263 505.4,259.2" fill="#6a6a6a"/>
<polygon points="506.4,325.9 498.5,330 490.2,266.3 498.3,262.4" fill="#686868"/>
<polygon points="499.6,329.4 491.9,333.6 483.5,269.7 491.4,265.7" fill="#656565"/>
<polygon points="493,333 485.5,337.3 477,273.1 484.7,269" fill="#636363"/>
<polygon points="486.6,336.6 479.2,341.1 470.6,276.6 478.1,272.5" fill="#606060"/>
<polygon points="480.3,340.4 473.2,344.9 464.4,280.2 471.7,276" fill="#5d5d5d"/>
<polygon points="474.2,344.2 467.3,348.8 458.3,283.8 465.5,279.5" fill="#5a5a5a"/>
<polygon points="468.3,348.1 461.6,352.7 452.5,287.5 459.4,283.2" fill="#585858"/>
<polygon points="462.6,352 456,356.7 446.8,291.3 453.5,286.9" fill="#555555"/>
<polygon points="457,356 450.7,360.8 441.3,295.1 447.8,290.6" fill="#525252"/>
<polygon points="451.6,360.1 445.6,365 436.1,299 442.3,294.4" fill="#4e4e4e"/>
<polygon points="446.5,364.2 440.6,369.2 431,303 437,298.3" fill="#4b4b4b"/>
<polygon points="441.5,368.4 435.9,373.5 426.2,307 431.9,302.3" fill="#484848"/>
<polygon points="436.8,372.7 431.4,377.8 421.5,311 427,306.3" fill="#444444"/>
<polygon points="432.2,377 427.2,382.2 417.1,315.2 422.3,310.3" fill="#404040"/>
<polygon points="427.9,381.4 423.1,386.6 413,319.3 417.9,314.4" fill="#3d3d3d"/>
<polygon points="423.8,385.8 419.3,391.1 409,323.6 413.7,318.6" fill="#393939"/>
<polygon points="420,390.3 415.7,395.7 405.3,327.8 409.7,322.8" fill="#333333"/>
<polygon points="416.3,394.9 412.4,400.3 401.9,332.2 406,327.1" fill="#2e2e2e"/>
<polygon points="413,399.5 409.3,405 398.7,336.5 402.5,331.4" fill="#282828"/>
<polygon points="409.8,404.1 406.5,409.7 395.8,341 399.3,335.8" fill="#232323"/>
<polygon points="407,408.8 403.9,414.4 393.1,345.4 396.3,340.2" fill="#1d1d1d"/>
<polygon points="404.4,413.6 401.7,419.2 390.7,349.9 393.6,344.6" fill="#171717"/>
<polygon points="402,418.4 399.7,424.1 388.6,354.5 391.1,349.1" fill="#111111"/>
<polygon points="400,423.2 397.9,429 386.8,359.1 389,353.7" fill="#0b0b0b"/>
<polygon points="398.2,428.1 396.5,433.9 385.3,363.7 387.1,358.2" fill="#070707"/>
<polygon points="396.7,433 395.3,438.8 384.1,368.3 385.5,362.9" fill="#040404"/>
<polygon points="395.5,438 394.5,443.8 383.1,373 384.3,367.5" fill="#000000"/>
<polygon points="394.6,442.9 393.9,448.8 382.5,377.7 383.3,372.2" fill="#000000"/>
<polygon points="394,447.9 393.7,453.9 382.2,382.5 382.6,376.9" fill="#000000"/>
<polygon points="393.7,453 393.8,458.9 382.2,387.2 382.2,381.6" fill="#000000"/>
<polygon points="393.8,458 394.2,464 382.6,392 382.2,386.4" fill="#000000"/>
<polygon points="394.1,463.1 394.4,466 382.8,393.9 382.5,391.1" fill="#000000"/>
<polyline class="d" points="1035.3,252.9 1035.8,194.2"/>
<polyline class="d" points="998,249.3 998,190.9"/>
<polyline class="d" points="960.2,247 959.6,188.7"/>
<polyline class="d" points="922,245.9 920.8,187.7"/>
<polyline class="d" points="883.5,246.1 881.8,187.9"/>
<polyline class="d" points="845,247.5 842.7,189.2"/>
<polyline class="d" points="806.6,250.1 803.7,191.7"/>
<polyline class="d" points="768.5,254 765.1,195.3"/>
<polyline class="d" points="730.9,259.1 726.9,200"/>
<polyline class="d" points="694,265.5 689.4,206"/>
<polyline class="d" points="658,273.1 652.8,213"/>
<polyline class="d" points="623.1,281.9 617.3,221.3"/>
<polyline class="d" points="589.6,291.9 583.2,230.7"/>
<polyline class="d" points="557.6,303.2 550.6,241.2"/>
<polyline class="d" points="527.5,315.7 519.9,252.9"/>
<polyline class="d" points="499.6,329.4 491.4,265.7"/>
<polyline class="d" points="474.2,344.2 465.5,279.5"/>
<polyline class="d" points="451.6,360.1 442.3,294.4"/>
<polyline class="d" points="432.2,377 422.3,310.3"/>
<polyline class="d" points="416.3,394.9 406,327.1"/>
<polyline class="d" points="404.4,413.6 393.6,344.6"/>
<polyline class="d" points="396.7,433 385.5,362.9"/>
<polyline class="d" points="393.7,453 382.2,381.6"/>
<polyline class="e" points="1044.3,253.9 1035.2,252.8 1026,251.8 1016.7,250.9 1007.4,250.1 998.1,249.3 988.7,248.6 979.3,248 969.9,247.5 960.4,247 950.9,246.6 941.4,246.3 931.9,246.1 922.4,245.9 912.8,245.9 903.2,245.9 893.7,245.9 884.1,246.1 874.5,246.3 864.9,246.6 855.3,247 845.8,247.5 836.2,248 826.6,248.6 817.1,249.3 807.6,250.1 798,250.9 788.6,251.8 779.1,252.8 769.7,253.9 760.2,255 750.9,256.3 741.5,257.5 732.2,258.9 723,260.4 713.8,261.9 704.6,263.5 695.5,265.2 686.4,267 677.4,268.8 668.5,270.7 659.6,272.7 650.8,274.8 642,276.9 633.4,279.1 624.8,281.4 616.3,283.8 607.9,286.2 599.6,288.8 591.3,291.4 583.2,294.1 575.2,296.8 567.3,299.6 559.4,302.5 551.7,305.5 544.2,308.6 536.7,311.7 529.4,314.9 522.2,318.2 515.1,321.5 508.2,324.9 501.5,328.4 494.9,332 488.4,335.6 482.1,339.3 476,343.1 470,346.9 464.3,350.8 458.7,354.8 453.3,358.8 448.1,362.9 443.1,367.1 438.3,371.3 433.7,375.6 429.3,379.9 425.2,384.3 421.3,388.8 417.6,393.3 414.1,397.9 410.9,402.5 408,407.1 405.3,411.8 402.9,416.6 400.7,421.4 398.9,426.2 397.3,431.1 396,436 394.9,440.9 394.2,445.9 393.8,450.9 393.7,455.9 393.9,461 394.4,466"/>
<polygon points="1025.8,208.5 1019.5,207.8 1019.5,196.2 1025.9,196.9" fill="#969696"/>
<polygon points="1021,208 1011,207 1011,195.3 1021,196.3" fill="#969696"/>
<polygon points="1012.5,207.1 1002.5,206.2 1002.5,194.6 1012.6,195.5" fill="#969696"/>
<polygon points="1004,206.3 994,205.5 994,193.9 1004,194.7" fill="#969696"/>
<polygon points="995.5,205.6 985.4,204.8 985.4,193.2 995.5,194" fill="#969696"/>
<polygon points="986.9,204.9 976.8,204.2 976.7,192.7 986.9,193.3" fill="#979797"/>
<polygon points="978.3,204.3 968.2,203.7 968.1,192.1 978.3,192.8" fill="#979797"/>
<polygon points="969.7,203.8 959.5,203.3 959.4,191.7 969.6,192.2" fill="#979797"/>
<polygon points="961,203.4 950.8,202.9 950.7,191.3 960.9,191.8" fill="#979797"/>
<polygon points="952.3,203 942.1,202.6 941.9,191 952.2,191.4" fill="#979797"/>
<polygon points="943.6,202.6 933.3,202.3 933.1,190.8 943.5,191.1" fill="#979797"/>
<polygon points="934.9,202.4 924.6,202.1 924.4,190.6 934.7,190.8" fill="#979797"/>
<polygon points="926.1,202.2 915.8,202 915.6,190.5 925.9,190.6" fill="#969696"/>
<polygon points="917.4,202 907,202 906.8,190.4 917.1,190.5" fill="#969696"/>
<polygon points="908.6,202 898.2,202 897.9,190.4 908.3,190.4" fill="#969696"/>
<polygon points="899.8,202 889.4,202.1 889.1,190.5 899.5,190.4" fill="#969696"/>
<polygon points="891,202 880.6,202.2 880.3,190.7 890.7,190.5" fill="#969696"/>
<polygon points="882.2,202.2 871.8,202.4 871.4,190.9 881.8,190.6" fill="#969696"/>
<polygon points="873.4,202.4 863,202.7 862.6,191.1 873,190.8" fill="#969696"/>
<polygon points="864.6,202.7 854.2,203.1 853.8,191.5 864.2,191.1" fill="#959595"/>
<polygon points="855.7,203 845.4,203.5 844.9,191.9 855.3,191.4" fill="#959595"/>
<polygon points="846.9,203.4 836.6,203.9 836.1,192.4 846.5,191.8" fill="#959595"/>
<polygon points="838.2,203.9 827.8,204.5 827.3,192.9 837.7,192.3" fill="#959595"/>
<polygon points="829.4,204.4 819,205.1 818.5,193.5 828.9,192.8" fill="#959595"/>
<polygon points="820.6,205 810.3,205.8 809.7,194.2 820.1,193.4" fill="#949494"/>
<polygon points="811.8,205.6 801.6,206.5 801,194.9 811.3,194" fill="#949494"/>
<polygon points="803.1,206.4 792.9,207.3 792.3,195.7 802.5,194.8" fill="#939393"/>
<polygon points="794.4,207.2 784.2,208.2 783.6,196.6 793.8,195.5" fill="#939393"/>
<polygon points="785.7,208 775.5,209.1 774.9,197.5 785.1,196.4" fill="#929292"/>
<polygon points="777.1,209 766.9,210.2 766.2,198.5 776.4,197.3" fill="#929292"/>
<polygon points="768.4,210 758.3,211.2 757.6,199.5 767.8,198.3" fill="#919191"/>
<polygon points="759.9,211 749.8,212.4 749,200.7 759.1,199.3" fill="#919191"/>
<polygon points="751.3,212.2 741.3,213.6 740.5,201.9 750.6,200.5" fill="#909090"/>
<polygon points="742.8,213.4 732.8,214.8 732,203.1 742,201.6" fill="#909090"/>
<polygon points="734.3,214.6 724.4,216.2 723.6,204.4 733.5,202.9" fill="#8f8f8f"/>
<polygon points="725.9,215.9 716,217.6 715.2,205.8 725.1,204.2" fill="#8f8f8f"/>
<polygon points="717.5,217.3 707.7,219.1 706.9,207.3 716.7,205.6" fill="#8e8e8e"/>
<polygon points="709.2,218.8 699.5,220.6 698.6,208.8 708.3,207" fill="#8d8d8d"/>
<polygon points="700.9,220.3 691.3,222.2 690.3,210.3 700,208.5" fill="#8c8c8c"/>
<polygon points="692.7,221.9 683.1,223.9 682.2,212 691.8,210.1" fill="#8b8b8b"/>
<polygon points="684.6,223.6 675.1,225.6 674.1,213.7 683.6,211.7" fill="#8a8a8a"/>
<polygon points="676.5,225.3 667.1,227.4 666.1,215.5 675.5,213.4" fill="#898989"/>
<polygon points="668.5,227.1 659.1,229.2 658.1,217.3 667.5,215.1" fill="#888888"/>
<polygon points="660.5,228.9 651.3,231.2 650.2,219.2 659.5,217" fill="#878787"/>
<polygon points="652.7,230.8 643.5,233.2 642.4,221.2 651.6,218.9" fill="#858585"/>
<polygon points="644.9,232.8 635.8,235.2 634.7,223.2 643.8,220.8" fill="#848484"/>
<polygon points="637.2,234.8 628.2,237.3 627.1,225.3 636.1,222.8" fill="#828282"/>
<polygon points="629.6,237 620.7,239.5 619.6,227.4 628.4,224.9" fill="#818181"/>
<polygon points="622,239.1 613.3,241.8 612.1,229.6 620.9,227" fill="#808080"/>
<polygon points="614.6,241.4 606,244.1 604.8,231.9 613.4,229.2" fill="#7f7f7f"/>
<polygon points="607.3,243.7 598.8,246.4 597.5,234.3 606.1,231.5" fill="#7e7e7e"/>
<polygon points="600.1,246 591.7,248.9 590.4,236.7 598.8,233.8" fill="#7c7c7c"/>
<polygon points="592.9,248.4 584.7,251.4 583.4,239.1 591.7,236.2" fill="#7a7a7a"/>
<polygon points="585.9,250.9 577.8,253.9 576.5,241.7 584.6,238.7" fill="#787878"/>
<polygon points="579,253.5 571,256.6 569.7,244.2 577.7,241.2" fill="#767676"/>
<polygon points="572.2,256.1 564.4,259.2 563,246.9 570.9,243.8" fill="#747474"/>
<polygon points="565.6,258.8 557.9,262 556.5,249.6 564.2,246.4" fill="#717171"/>
<polygon points="559,261.5 551.5,264.8 550.1,252.4 557.6,249.1" fill="#6e6e6e"/>
<polygon points="552.6,264.3 545.3,267.7 543.8,255.2 551.2,251.9" fill="#6c6c6c"/>
<polygon points="546.4,267.1 539.2,270.6 537.7,258.1 544.9,254.7" fill="#696969"/>
<polygon points="540.2,270.1 533.2,273.6 531.7,261 538.8,257.6" fill="#676767"/>
<polygon points="534.2,273 527.4,276.6 525.9,264 532.8,260.5" fill="#646464"/>
<polygon points="528.4,276.1 521.7,279.7 520.2,267.1 526.9,263.5" fill="#626262"/>
<polygon points="522.7,279.1 516.2,282.9 514.7,270.2 521.2,266.5" fill="#5f5f5f"/>
<polygon points="517.2,282.3 510.9,286.1 509.3,273.3 515.6,269.6" fill="#5c5c5c"/>
<polygon points="511.8,285.5 505.7,289.3 504.1,276.6 510.3,272.8" fill="#595959"/>
<polygon points="506.6,288.7 500.7,292.6 499.1,279.8 505,276" fill="#575757"/>
<polygon points="501.6,292 495.9,296 494.3,283.1 500,279.2" fill="#545454"/>
<polygon points="496.8,295.4 491.3,299.4 489.6,286.5 495.1,282.6" fill="#515151"/>
<polygon points="492.1,298.8 486.8,302.9 485.1,289.9 490.4,285.9" fill="#4d4d4d"/>
<polygon points="487.6,302.3 482.6,306.4 480.9,293.4 485.9,289.3" fill="#4a4a4a"/>
<polygon points="483.3,305.8 478.5,310 476.8,296.9 481.6,292.8" fill="#474747"/>
<polygon points="479.2,309.3 474.7,313.6 472.9,300.5 477.5,296.3" fill="#434343"/>
<polygon points="475.3,312.9 471,317.3 469.2,304.1 473.6,299.9" fill="#3f3f3f"/>
<polygon points="471.6,316.6 467.6,321 465.8,307.8 469.9,303.5" fill="#3c3c3c"/>
<polygon points="468.2,320.3 464.4,324.7 462.5,311.5 466.4,307.1" fill="#383838"/>
<polygon points="464.9,324 461.4,328.5 459.5,315.2 463.1,310.8" fill="#323232"/>
<polygon points="461.9,327.8 458.6,332.3 456.7,319 460,314.5" fill="#2d2d2d"/>
<polygon points="459.1,331.6 456,336.2 454.2,322.8 457.2,318.3" fill="#272727"/>
<polygon points="456.5,335.5 453.7,340.1 451.8,326.6 454.6,322.1" fill="#222222"/>
<polygon points="454.1,339.4 451.7,344 449.8,330.5 452.2,325.9" fill="#1c1c1c"/>
<polygon points="452,343.3 449.9,348 447.9,334.4 450.1,329.8" fill="#161616"/>
<polygon points="450.2,347.3 448.3,351.9 446.4,338.3 448.2,333.7" fill="#101010"/>
<polygon points="448.6,351.2 447,356 445,342.3 446.6,337.6" fill="#0a0a0a"/>
<polygon points="447.2,355.3 445.9,360 444,346.3 445.2,341.6" fill="#060606"/>
<polygon points="446.1,359.3 445.1,364.1 443.2,350.3 444.1,345.6" fill="#030303"/>
<polygon points="445.3,363.4 444.6,368.2 442.6,354.4 443.3,349.6" fill="#000000"/>
<polygon points="444.7,367.4 444.4,372.3 442.4,358.4 442.7,353.6" fill="#000000"/>
<polygon points="444.4,371.5 444.4,376.4 442.4,362.5 442.4,357.7" fill="#000000"/>
<polygon points="444.4,375.7 444.7,380.5 442.7,366.6 442.4,361.8" fill="#000000"/>
<polygon points="444.7,379.8 445.3,384.7 443.3,370.7 442.6,365.8" fill="#000000"/>
<polygon points="445.2,383.9 445.7,386.3 443.6,372.3 443.2,369.9" fill="#000000"/>
<polyline class="d" points="1021,208 1021,196.3"/>
<polyline class="d" points="986.9,204.9 986.9,193.3"/>
<polyline class="d" points="952.3,203 952.2,191.4"/>
<polyline class="d" points="917.4,202 917.1,190.5"/>
<polyline class="d" points="882.2,202.2 881.8,190.6"/>
<polyline class="d" points="846.9,203.4 846.5,191.8"/>
<polyline class="d" points="811.8,205.6 811.3,194"/>
<polyline class="d" points="777.1,209 776.4,197.3"/>
<polyline class="d" points="742.8,213.4 742,201.6"/>
<polyline class="d" points="709.2,218.8 708.3,207"/>
<polyline class="d" points="676.5,225.3 675.5,213.4"/>
<polyline class="d" points="644.9,232.8 643.8,220.8"/>
<polyline class="d" points="614.6,241.4 613.4,229.2"/>
<polyline class="d" points="585.9,250.9 584.6,238.7"/>
<polyline class="d" points="559,261.5 557.6,249.1"/>
<polyline class="d" points="534.2,273 532.8,260.5"/>
<polyline class="d" points="511.8,285.5 510.3,272.8"/>
<polyline class="d" points="492.1,298.8 490.4,285.9"/>
<polyline class="d" points="475.3,312.9 473.6,299.9"/>
<polyline class="d" points="461.9,327.8 460,314.5"/>
<polyline class="d" points="452,343.3 450.1,329.8"/>
<polyline class="d" points="446.1,359.3 444.1,345.6"/>
<polyline class="d" points="444.4,375.7 442.4,361.8"/>
<polyline class="e" points="1025.8,208.5 1017.4,207.6 1008.9,206.8 1000.4,206 991.8,205.3 983.2,204.7 974.6,204.1 965.9,203.6 957.2,203.2 948.5,202.8 939.8,202.5 931,202.3 922.3,202.1 913.5,202 904.7,202 895.8,202 887,202.1 878.2,202.3 869.4,202.5 860.5,202.8 851.7,203.2 842.9,203.6 834.1,204.1 825.3,204.7 816.5,205.3 807.8,206 799,206.7 790.3,207.6 781.6,208.5 773,209.4 764.4,210.5 755.8,211.6 747.2,212.7 738.7,213.9 730.3,215.2 721.8,216.6 713.5,218 705.2,219.5 696.9,221.1 688.7,222.7 680.6,224.4 672.5,226.1 664.5,228 656.6,229.8 648.8,231.8 641,233.8 633.4,235.9 625.8,238 618.3,240.2 610.9,242.5 603.6,244.8 596.4,247.2 589.3,249.7 582.4,252.2 575.5,254.8 568.8,257.5 562.2,260.2 555.7,262.9 549.3,265.8 543.1,268.7 537.1,271.6 531.1,274.6 525.4,277.7 519.8,280.8 514.3,284 509,287.2 503.9,290.5 499,293.8 494.2,297.2 489.6,300.7 485.3,304.2 481.1,307.7 477.1,311.3 473.3,314.9 469.7,318.6 466.3,322.3 463.2,326.1 460.3,329.9 457.6,333.8 455.1,337.6 452.9,341.6 450.9,345.5 449.2,349.5 447.8,353.5 446.5,357.5 445.6,361.6 444.9,365.7 444.5,369.8 444.4,373.9 444.5,378 444.9,382.2 445.7,386.3"/>
<polygon points="1311.9,415.2 1311.1,411 1310.1,406.8 1308.8,402.6 1307.3,398.5 1305.5,394.4 1303.5,390.3 1301.3,386.3 1298.8,382.4 1296.1,378.5 1293.2,374.6 1290.1,370.8 1286.8,367.1 1283.3,363.4 1279.6,359.7 1275.6,356.1 1271.5,352.6 1267.2,349.1 1262.8,345.7 1258.1,342.3 1253.3,339 1248.3,335.8 1243.1,332.6 1237.8,329.5 1232.3,326.5 1226.7,323.5 1220.9,320.6 1215,317.7 1209,315 1202.8,312.2 1196.5,309.6 1190,307 1183.5,304.5 1176.8,302.1 1170,299.7 1163.1,297.4 1156.1,295.2 1148.9,293 1141.7,290.9 1134.4,288.9 1127,286.9 1119.5,285 1111.9,283.2 1104.2,281.5 1096.5,279.8 1088.7,278.2 1080.8,276.7 1098.8,262.1 1107.5,263.7 1116.2,265.4 1124.8,267.1 1133.3,269 1141.8,270.9 1150.1,272.9 1158.4,275 1166.6,277.1 1174.7,279.4 1182.6,281.7 1190.5,284 1198.3,286.5 1206,289 1213.5,291.6 1220.9,294.3 1228.2,297.1 1235.4,299.9 1242.5,302.8 1249.4,305.8 1256.2,308.9 1262.8,312 1269.3,315.2 1275.7,318.5 1281.8,321.8 1287.9,325.3 1293.7,328.8 1299.4,332.3 1304.9,336 1310.2,339.7 1315.4,343.4 1320.3,347.3 1325.1,351.2 1329.6,355.2 1334,359.2 1338.1,363.3 1342,367.5 1345.7,371.7 1349.2,376 1352.4,380.3 1355.4,384.7 1358.2,389.2 1360.7,393.7 1362.9,398.3 1364.9,402.9 1366.6,407.6 1368.1,412.3 1369.2,417" fill="#969696"/>
<polyline class="d" points="1310.4,407.8 1367,408.6"/>
<polyline class="d" points="1304.1,391.4 1358.7,390.1"/>
<polyline class="d" points="1294.1,375.8 1346.3,372.4"/>
<polyline class="d" points="1280.8,360.9 1330.3,355.8"/>
<polyline class="d" points="1264.4,346.9 1310.9,340.1"/>
<polyline class="d" points="1245.1,333.9 1288.5,325.6"/>
<polyline class="d" points="1223.4,321.8 1263.4,312.3"/>
<polyline class="d" points="1199.3,310.8 1235.9,300.1"/>
<polyline class="d" points="1173.3,300.8 1206.3,289.1"/>
<polyline class="d" points="1145.4,292 1174.9,279.4"/>
<polyline class="d" points="1116,284.2 1141.8,270.9"/>
<polyline class="d" points="1085.3,277.6 1107.4,263.7"/>
<polyline class="e" points="1311.9,415.2 1311.1,411 1310.1,406.8 1308.8,402.6 1307.3,398.5 1305.5,394.4 1303.5,390.3 1301.3,386.3 1298.8,382.4 1296.1,378.5 1293.2,374.6 1290.1,370.8 1286.8,367.1 1283.3,363.4 1279.6,359.7 1275.6,356.1 1271.5,352.6 1267.2,349.1 1262.8,345.7 1258.1,342.3 1253.3,339 1248.3,335.8 1243.1,332.6 1237.8,329.5 1232.3,326.5 1226.7,323.5 1220.9,320.6 1215,317.7 1209,315 1202.8,312.2 1196.5,309.6 1190,307 1183.5,304.5 1176.8,302.1 1170,299.7 1163.1,297.4 1156.1,295.2 1148.9,293 1141.7,290.9 1134.4,288.9 1127,286.9 1119.5,285 1111.9,283.2 1104.2,281.5 1096.5,279.8 1088.7,278.2 1080.8,276.7"/>
<polygon points="1369.2,417 1368.1,412.5 1374.8,343.5 1375.9,347.8" fill="#161616"/>
<polygon points="1368.4,413.3 1366.7,407.7 1373.3,339.1 1375,344.3" fill="#1b1b1b"/>
<polygon points="1367,408.6 1364.9,403 1371.5,334.7 1373.5,339.9" fill="#202020"/>
<polygon points="1365.3,403.9 1363,398.4 1369.4,330.3 1371.8,335.5" fill="#252525"/>
<polygon points="1363.3,399.2 1360.7,393.8 1367.1,326 1369.8,331.1" fill="#2a2a2a"/>
<polygon points="1361.1,394.6 1358.2,389.3 1364.5,321.8 1367.5,326.8" fill="#2e2e2e"/>
<polygon points="1358.7,390.1 1355.4,384.8 1361.6,317.6 1365,322.5" fill="#333333"/>
<polygon points="1355.9,385.6 1352.4,380.4 1358.5,313.4 1362.2,318.3" fill="#383838"/>
<polygon points="1353,381.1 1349.2,376 1355.2,309.3 1359.1,314.1" fill="#3b3b3b"/>
<polygon points="1349.8,376.8 1345.7,371.7 1351.6,305.3 1355.8,310" fill="#3f3f3f"/>
<polygon points="1346.3,372.4 1342,367.4 1347.8,301.3 1352.3,306" fill="#424242"/>
<polygon points="1342.6,368.2 1338,363.2 1343.8,297.4 1348.5,302" fill="#464646"/>
<polygon points="1338.7,364 1333.9,359.1 1339.5,293.5 1344.5,298.1" fill="#494949"/>
<polygon points="1334.6,359.8 1329.5,355 1335,289.7 1340.3,294.2" fill="#4d4d4d"/>
<polygon points="1330.3,355.8 1324.9,351.1 1330.4,286 1335.9,290.4" fill="#505050"/>
<polygon points="1325.7,351.8 1320.1,347.1 1325.5,282.3 1331.2,286.6" fill="#535353"/>
<polygon points="1321,347.8 1315.1,343.3 1320.4,278.7 1326.3,282.9" fill="#575757"/>
<polygon points="1316,343.9 1310,339.5 1315.1,275.1 1321.3,279.3" fill="#5a5a5a"/>
<polygon points="1310.9,340.1 1304.6,335.8 1309.6,271.6 1316,275.7" fill="#5d5d5d"/>
<polygon points="1305.6,336.4 1299.1,332.1 1304,268.2 1310.6,272.2" fill="#606060"/>
<polygon points="1300.1,332.7 1293.3,328.5 1298.1,264.9 1305,268.8" fill="#636363"/>
<polygon points="1294.4,329.2 1287.4,325 1292.1,261.6 1299.2,265.5" fill="#666666"/>
<polygon points="1288.5,325.6 1281.4,321.6 1285.9,258.4 1293.2,262.2" fill="#696969"/>
<polygon points="1282.5,322.2 1275.2,318.2 1279.6,255.2 1287,258.9" fill="#6b6b6b"/>
<polygon points="1276.3,318.8 1268.8,314.9 1273.1,252.1 1280.7,255.8" fill="#6e6e6e"/>
<polygon points="1269.9,315.5 1262.2,311.7 1266.4,249.1 1274.2,252.7" fill="#707070"/>
<polygon points="1263.4,312.3 1255.5,308.6 1259.6,246.2 1267.6,249.7" fill="#737373"/>
<polygon points="1256.7,309.1 1248.7,305.5 1252.6,243.3 1260.8,246.7" fill="#757575"/>
<polygon points="1249.9,306 1241.7,302.5 1245.6,240.5 1253.9,243.8" fill="#777777"/>
<polygon points="1243,303 1234.6,299.6 1238.3,237.8 1246.8,241" fill="#797979"/>
<polygon points="1235.9,300.1 1227.4,296.8 1231,235.2 1239.6,238.3" fill="#7b7b7b"/>
<polygon points="1228.7,297.3 1220,294 1223.5,232.6 1232.3,235.6" fill="#7d7d7d"/>
<polygon points="1221.4,294.5 1212.6,291.3 1215.9,230.1 1224.8,233" fill="#7f7f7f"/>
<polygon points="1213.9,291.8 1204.9,288.7 1208.1,227.6 1217.2,230.5" fill="#818181"/>
<polygon points="1206.3,289.1 1197.2,286.2 1200.3,225.3 1209.5,228.1" fill="#838383"/>
<polygon points="1198.6,286.6 1189.4,283.7 1192.3,223 1201.7,225.7" fill="#858585"/>
<polygon points="1190.8,284.1 1181.5,281.3 1184.2,220.7 1193.7,223.4" fill="#878787"/>
<polygon points="1182.9,281.7 1173.4,279 1176.1,218.6 1185.7,221.1" fill="#888888"/>
<polygon points="1174.9,279.4 1165.3,276.8 1167.8,216.5 1177.5,219" fill="#8a8a8a"/>
<polygon points="1166.7,277.2 1157,274.6 1159.4,214.5 1169.3,216.9" fill="#8b8b8b"/>
<polygon points="1158.5,275 1148.7,272.6 1151,212.6 1160.9,214.9" fill="#8c8c8c"/>
<polygon points="1150.2,272.9 1140.3,270.6 1142.4,210.7 1152.5,212.9" fill="#8d8d8d"/>
<polygon points="1141.8,270.9 1131.8,268.7 1133.8,208.9 1143.9,211" fill="#8e8e8e"/>
<polygon points="1133.3,269 1123.2,266.8 1125.1,207.2 1135.3,209.2" fill="#8e8e8e"/>
<polygon points="1124.8,267.1 1114.6,265 1116.3,205.6 1126.6,207.5" fill="#8f8f8f"/>
<polygon points="1116.1,265.4 1105.8,263.4 1107.4,204 1117.9,205.8" fill="#8f8f8f"/>
<polygon points="1107.4,263.7 1098.8,262.1 1100.3,202.8 1109,204.3" fill="#909090"/>
<polyline class="d" points="1367,408.6 1373.5,339.9"/>
<polyline class="d" points="1358.7,390.1 1365,322.5"/>
<polyline class="d" points="1346.3,372.4 1352.3,306"/>
<polyline class="d" points="1330.3,355.8 1335.9,290.4"/>
<polyline class="d" points="1310.9,340.1 1316,275.7"/>
<polyline class="d" points="1288.5,325.6 1293.2,262.2"/>
<polyline class="d" points="1263.4,312.3 1267.6,249.7"/>
<polyline class="d" points="1235.9,300.1 1239.6,238.3"/>
<polyline class="d" points="1206.3,289.1 1209.5,228.1"/>
<polyline class="d" points="1174.9,279.4 1177.5,219"/>
<polyline class="d" points="1141.8,270.9 1143.9,211"/>
<polyline class="d" points="1107.4,263.7 1109,204.3"/>
<polyline class="e" points="1369.2,417 1368.1,412.3 1366.6,407.6 1364.9,402.9 1362.9,398.3 1360.7,393.7 1358.2,389.2 1355.4,384.7 1352.4,380.3 1349.2,376 1345.7,371.7 1342,367.5 1338.1,363.3 1334,359.2 1329.6,355.2 1325.1,351.2 1320.3,347.3 1315.4,343.4 1310.2,339.7 1304.9,336 1299.4,332.3 1293.7,328.8 1287.9,325.3 1281.8,321.8 1275.7,318.5 1269.3,315.2 1262.8,312 1256.2,308.9 1249.4,305.8 1242.5,302.8 1235.4,299.9 1228.2,297.1 1220.9,294.3 1213.5,291.6 1206,289 1198.3,286.5 1190.5,284 1182.6,281.7 1174.7,279.4 1166.6,277.1 1158.4,275 1150.1,272.9 1141.8,270.9 1133.3,269 1124.8,267.1 1116.2,265.4 1107.5,263.7 1098.8,262.1"/>
<polyline class="e" points="1098.8,262.1 1100.3,202.8"/>
<polygon points="1317.5,346.1 1316.8,342.3 1317.9,328.9 1318.7,332.6" fill="#000000"/>
<polygon points="1316.9,343 1315.7,338.4 1316.8,325 1318,329.6" fill="#040404"/>
<polygon points="1315.9,339.1 1314.4,334.5 1315.5,321.2 1317,325.7" fill="#090909"/>
<polygon points="1314.7,335.2 1312.9,330.7 1313.9,317.4 1315.7,321.9" fill="#0e0e0e"/>
<polygon points="1313.2,331.4 1311.1,326.9 1312.1,313.6 1314.2,318" fill="#131313"/>
<polygon points="1311.4,327.6 1309,323.1 1310.1,309.9 1312.5,314.3" fill="#171717"/>
<polygon points="1309.4,323.8 1306.8,319.4 1307.8,306.2 1310.5,310.6" fill="#1c1c1c"/>
<polygon points="1307.2,320.1 1304.3,315.7 1305.3,302.6 1308.2,306.9" fill="#212121"/>
<polygon points="1304.8,316.4 1301.6,312.1 1302.6,299 1305.8,303.2" fill="#242424"/>
<polygon points="1302.1,312.7 1298.7,308.5 1299.7,295.4 1303.1,299.6" fill="#282828"/>
<polygon points="1299.2,309.1 1295.5,304.9 1296.5,291.9 1300.2,296.1" fill="#2b2b2b"/>
<polygon points="1296.1,305.6 1292.2,301.4 1293.1,288.5 1297.1,292.6" fill="#2f2f2f"/>
<polygon points="1292.8,302 1288.6,298 1289.6,285.1 1293.8,289.1" fill="#333333"/>
<polygon points="1289.3,298.6 1284.9,294.6 1285.8,281.7 1290.2,285.7" fill="#383838"/>
<polygon points="1285.6,295.2 1280.9,291.2 1281.8,278.4 1286.5,282.3" fill="#3c3c3c"/>
<polygon points="1281.7,291.8 1276.8,287.9 1277.7,275.2 1282.6,279" fill="#404040"/>
<polygon points="1277.5,288.5 1272.5,284.7 1273.4,272 1278.4,275.8" fill="#444444"/>
<polygon points="1273.3,285.3 1268,281.5 1268.8,268.9 1274.1,272.6" fill="#484848"/>
<polygon points="1268.8,282.1 1263.3,278.4 1264.1,265.8 1269.6,269.4" fill="#4c4c4c"/>
<polygon points="1264.1,278.9 1258.4,275.3 1259.3,262.7 1265,266.3" fill="#505050"/>
<polygon points="1259.3,275.9 1253.4,272.3 1254.2,259.8 1260.1,263.3" fill="#535353"/>
<polygon points="1254.3,272.8 1248.2,269.3 1249,256.8 1255.1,260.3" fill="#575757"/>
<polygon points="1249.2,269.9 1242.9,266.4 1243.6,254 1249.9,257.4" fill="#5b5b5b"/>
<polygon points="1243.8,267 1237.4,263.6 1238.1,251.2 1244.6,254.5" fill="#5e5e5e"/>
<polygon points="1238.4,264.1 1231.7,260.8 1232.5,248.4 1239.1,251.7" fill="#616161"/>
<polygon points="1232.7,261.3 1225.9,258.1 1226.6,245.8 1233.5,248.9" fill="#656565"/>
<polygon points="1227,258.6 1220,255.4 1220.7,243.1 1227.7,246.2" fill="#686868"/>
<polygon points="1221.1,255.9 1213.9,252.8 1214.6,240.6 1221.7,243.6" fill="#6b6b6b"/>
<polygon points="1215,253.3 1207.7,250.3 1208.3,238.1 1215.7,241" fill="#6e6e6e"/>
<polygon points="1208.8,250.8 1201.4,247.8 1202,235.6 1209.5,238.5" fill="#707070"/>
<polygon points="1202.5,248.3 1194.9,245.4 1195.5,233.3 1203.1,236.1" fill="#737373"/>
<polygon points="1196,245.9 1188.3,243.1 1188.9,230.9 1196.6,233.7" fill="#767676"/>
<polygon points="1189.5,243.5 1181.6,240.8 1182.1,228.7 1190.1,231.4" fill="#787878"/>
<polygon points="1182.8,241.2 1174.8,238.6 1175.3,226.5 1183.3,229.1" fill="#7b7b7b"/>
<polygon points="1176,239 1167.8,236.4 1168.3,224.4 1176.5,226.9" fill="#7e7e7e"/>
<polygon points="1169.1,236.8 1160.8,234.3 1161.3,222.3 1169.6,224.8" fill="#818181"/>
<polygon points="1162,234.7 1153.6,232.3 1154.1,220.3 1162.5,222.7" fill="#848484"/>
<polygon points="1154.9,232.7 1146.4,230.3 1146.8,218.4 1155.4,220.7" fill="#868686"/>
<polygon points="1147.7,230.7 1139,228.4 1139.4,216.5 1148.1,218.7" fill="#888888"/>
<polygon points="1140.3,228.8 1131.6,226.6 1132,214.7 1140.8,216.8" fill="#8a8a8a"/>
<polygon points="1132.9,226.9 1124.1,224.8 1124.4,213 1133.3,215" fill="#8b8b8b"/>
<polygon points="1125.4,225.1 1116.4,223.1 1116.8,211.3 1125.8,213.3" fill="#8c8c8c"/>
<polygon points="1117.8,223.4 1108.7,221.5 1109.1,209.7 1118.1,211.6" fill="#8d8d8d"/>
<polygon points="1110.1,221.8 1101,219.9 1101.3,208.1 1110.4,209.9" fill="#8d8d8d"/>
<polygon points="1102.3,220.2 1093.1,218.4 1093.4,206.6 1102.6,208.4" fill="#8e8e8e"/>
<polygon points="1094.5,218.7 1085.2,217 1085.4,205.2 1094.8,206.9" fill="#8e8e8e"/>
<polygon points="1086.6,217.2 1082,216.4 1082.2,204.7 1086.8,205.5" fill="#8f8f8f"/>
<polyline class="d" points="1315.9,339.1 1317,325.7"/>
<polyline class="d" points="1309.4,323.8 1310.5,310.6"/>
<polyline class="d" points="1299.2,309.1 1300.2,296.1"/>
<polyline class="d" points="1285.6,295.2 1286.5,282.3"/>
<polyline class="d" points="1268.8,282.1 1269.6,269.4"/>
<polyline class="d" points="1249.2,269.9 1249.9,257.4"/>
<polyline class="d" points="1227,258.6 1227.7,246.2"/>
<polyline class="d" points="1202.5,248.3 1203.1,236.1"/>
<polyline class="d" points="1176,239 1176.5,226.9"/>
<polyline class="d" points="1147.7,230.7 1148.1,218.7"/>
<polyline class="d" points="1117.8,223.4 1118.1,211.6"/>
<polyline class="d" points="1086.6,217.2 1086.8,205.5"/>
<polyline class="e" points="1317.5,346.1 1316.7,342.1 1315.7,338.2 1314.3,334.3 1312.7,330.4 1310.9,326.6 1308.9,322.8 1306.6,319 1304,315.3 1301.3,311.7 1298.3,308 1295.1,304.5 1291.7,301 1288.1,297.5 1284.3,294.1 1280.3,290.7 1276.1,287.4 1271.7,284.1 1267.1,280.9 1262.4,277.8 1257.5,274.7 1252.4,271.7 1247.1,268.7 1241.7,265.8 1236.1,263 1230.4,260.2 1224.5,257.4 1218.5,254.8 1212.3,252.2 1206,249.6 1199.6,247.2 1193,244.8 1186.4,242.4 1179.6,240.1 1172.6,237.9 1165.6,235.8 1158.5,233.7 1151.2,231.6 1143.9,229.7 1136.5,227.8 1128.9,226 1121.3,224.2 1113.6,222.5 1105.8,220.9 1098,219.3 1090,217.8 1082,216.4"/>
<polyline class="e" points="1025.4,268.2 1044.3,253.9"/>
<polyline class="e" points="1080.8,276.7 1098.8,262.1"/>
<polyline class="e" points="1082,216.4 1082.2,204.7"/>
<polygon points="1249.4,337.1 1309.2,330.4 1308.4,353.8 1278.5,359.7 1275.3,397.8 1246.2,401.4" fill="#8f8f8f"/>
<polygon points="1235.7,397.4 1246.2,401.4 1275.3,397.8 1264,419.2 1233.3,438.5" fill="#8f8f8f"/>
<polygon points="1298.7,303.7 1309.2,317.4 1320.5,338.4 1319.7,353.8 1308.4,353.8 1309.2,332.3 1304.3,317.4" fill="#282828"/>
<polygon points="1278.5,359.7 1275.3,411.1 1301.1,386.9" fill="#585858"/>
<polygon points="1278.8,359.4 1318.8,354.3 1301.1,386.9" fill="#8f8f8f"/>
<polyline class="e" points="1249.4,337.1 1309.2,330.4 1308.4,353.8 1278.5,359.7 1275.3,397.8 1246.2,401.4 1249.4,337.1"/>
<polyline class="e" points="1235.7,397.4 1246.2,401.4"/>
<polyline class="e" points="1235.7,397.4 1233.3,438.5"/>
<polyline class="e" points="1278.5,359.7 1275.3,411.1"/>
<polyline class="e" points="1278.5,359.7 1301.1,386.9"/>
<polyline class="d" points="1252.7,340 1276.9,361"/>
<circle cx="1274.9" cy="374" r="2.6" fill="#505050" stroke="#2a2a2a" stroke-width="0.8"/>
<circle cx="1268" cy="414.3" r="6.3" fill="#505050" stroke="#2a2a2a" stroke-width="0.8"/>
<polygon points="1025.9,196.9 1017.4,196 1008.9,195.1 1000.4,194.4 991.8,193.7 983.2,193.1 974.5,192.5 965.9,192 957.2,191.6 948.4,191.2 939.7,190.9 930.9,190.7 922.1,190.5 913.3,190.4 904.4,190.4 895.6,190.4 886.8,190.5 877.9,190.7 869.1,190.9 860.2,191.2 851.4,191.6 842.5,192 833.7,192.5 824.9,193.1 816.1,193.7 807.3,194.4 798.6,195.1 789.8,195.9 781.1,196.8 772.4,197.8 763.8,198.8 755.2,199.9 746.6,201 738.1,202.2 729.6,203.5 721.1,204.8 712.8,206.2 704.4,207.7 696.1,209.2 687.9,210.8 679.8,212.5 671.7,214.2 663.7,216 655.7,217.9 647.9,219.8 640.1,221.8 632.4,223.8 624.8,225.9 617.3,228.1 609.9,230.3 602.5,232.6 595.3,235 588.2,237.4 581.2,239.9 574.3,242.5 567.6,245.1 561,247.7 554.4,250.5 548.1,253.3 541.8,256.1 535.8,259 529.8,262 524,265 518.4,268.1 512.9,271.2 507.6,274.4 502.4,277.6 497.5,280.9 492.7,284.3 488.1,287.7 483.7,291.1 479.5,294.6 475.4,298.1 471.6,301.7 468,305.3 464.6,309 461.5,312.7 458.5,316.5 455.8,320.3 453.3,324.1 451.1,328 449.1,331.9 447.3,335.8 445.9,339.7 444.6,343.7 443.7,347.7 442.9,351.8 442.5,355.8 442.4,359.9 442.5,363.9 442.9,368 443.6,372.1 444.6,376.2 445.9,380.3 447.5,384.5 449.4,388.6 451.6,392.7 454.1,396.8 456.9,400.8 460,404.9 463.4,408.9 467.2,413 471.3,417 475.7,420.9 480.4,424.9 485.4,428.8 490.8,432.6 496.4,436.4 502.4,440.2 508.7,443.9 515.4,447.5 522.3,451.1 529.5,454.6 537.1,458.1 544.9,461.5 553.1,464.8 561.5,468 570.3,471.1 579.3,474.2 588.6,477.2 598.2,480 608,482.8 554.9,520.1 543,516.7 531.4,513.1 520.1,509.4 509.2,505.6 498.7,501.8 488.5,497.8 478.7,493.7 469.3,489.5 460.3,485.2 451.7,480.8 443.5,476.4 435.6,471.9 428.2,467.4 421.2,462.7 414.5,458 408.3,453.3 402.5,448.5 397,443.7 392,438.9 387.3,434 383.1,429.1 379.2,424.1 375.7,419.2 372.6,414.2 369.9,409.3 367.6,404.3 365.6,399.3 364,394.3 362.8,389.4 361.9,384.4 361.4,379.5 361.2,374.6 361.3,369.7 361.8,364.8 362.6,360 363.7,355.2 365.2,350.4 366.9,345.6 369,340.9 371.4,336.3 374,331.7 376.9,327.1 380.1,322.6 383.6,318.1 387.3,313.7 391.3,309.3 395.6,305 400,300.7 404.8,296.5 409.7,292.4 414.9,288.3 420.3,284.2 425.9,280.3 431.7,276.4 437.7,272.6 443.9,268.8 450.2,265.1 456.8,261.5 463.6,257.9 470.5,254.4 477.5,251 484.8,247.6 492.1,244.3 499.7,241.1 507.4,238 515.2,234.9 523.1,231.9 531.2,229 539.4,226.1 547.7,223.3 556.1,220.6 564.7,218 573.3,215.4 582.1,212.9 590.9,210.5 599.8,208.2 608.8,205.9 618,203.7 627.1,201.6 636.4,199.5 645.7,197.6 655.1,195.7 664.6,193.8 674.1,192.1 683.7,190.4 693.4,188.8 703.1,187.3 712.8,185.8 722.6,184.4 732.4,183.1 742.3,181.9 752.2,180.7 762.1,179.6 772.1,178.6 782.1,177.6 792.1,176.8 802.2,176 812.2,175.2 822.3,174.6 832.4,174 842.5,173.5 852.6,173.1 862.7,172.7 872.8,172.4 882.9,172.2 893,172 903.1,172 913.2,172 923.3,172 933.3,172.2 943.4,172.4 953.4,172.7 963.4,173.1 973.4,173.5 983.3,174 993.2,174.6 1003.1,175.3 1013,176 1022.8,176.8 1032.6,177.7 1042.3,178.6 1052,179.6" fill="#8f8f8f"/>
<polyline class="d" points="1021,196.3 1041.5,178.5"/>
<polyline class="d" points="986.9,193.3 1002.4,175.2"/>
<polyline class="d" points="952.2,191.4 962.7,173"/>
<polyline class="d" points="917.1,190.5 922.6,172"/>
<polyline class="d" points="881.8,190.6 882.3,172.2"/>
<polyline class="d" points="846.5,191.8 841.9,173.5"/>
<polyline class="d" points="811.3,194 801.7,176"/>
<polyline class="d" points="776.4,197.3 761.7,179.6"/>
<polyline class="d" points="742,201.6 722.2,184.5"/>
<polyline class="d" points="708.3,207 683.4,190.4"/>
<polyline class="d" points="675.5,213.4 645.5,197.6"/>
<polyline class="d" points="643.8,220.8 608.7,205.9"/>
<polyline class="d" points="613.4,229.2 573.2,215.5"/>
<polyline class="d" points="584.6,238.7 539.3,226.1"/>
<polyline class="d" points="557.6,249.1 507.3,238"/>
<polyline class="d" points="532.8,260.5 477.5,251"/>
<polyline class="d" points="510.3,272.8 450.3,265.1"/>
<polyline class="d" points="490.4,285.9 425.9,280.2"/>
<polyline class="d" points="473.6,299.9 404.8,296.4"/>
<polyline class="d" points="460,314.5 387.4,313.6"/>
<polyline class="d" points="450.1,329.8 374.1,331.5"/>
<polyline class="d" points="444.1,345.6 365.2,350.2"/>
<polyline class="d" points="442.4,361.8 361.3,369.5"/>
<polyline class="d" points="445.1,378.1 362.7,389.2"/>
<polyline class="d" points="452.7,394.5 369.8,409"/>
<polyline class="d" points="465.1,410.8 382.9,428.8"/>
<polyline class="d" points="482.6,426.6 402.1,448.2"/>
<polyline class="d" points="505.2,441.8 427.7,467.1"/>
<polyline class="d" points="532.8,456.2 459.7,484.9"/>
<polyline class="d" points="565.3,469.4 497.9,501.5"/>
<polyline class="d" points="602.3,481.2 542,516.4"/>
<polyline class="e" points="1025.9,196.9 1017.4,196 1008.9,195.1 1000.4,194.4 991.8,193.7 983.2,193.1 974.5,192.5 965.9,192 957.2,191.6 948.4,191.2 939.7,190.9 930.9,190.7 922.1,190.5 913.3,190.4 904.4,190.4 895.6,190.4 886.8,190.5 877.9,190.7 869.1,190.9 860.2,191.2 851.4,191.6 842.5,192 833.7,192.5 824.9,193.1 816.1,193.7 807.3,194.4 798.6,195.1 789.8,195.9 781.1,196.8 772.4,197.8 763.8,198.8 755.2,199.9 746.6,201 738.1,202.2 729.6,203.5 721.1,204.8 712.8,206.2 704.4,207.7 696.1,209.2 687.9,210.8 679.8,212.5 671.7,214.2 663.7,216 655.7,217.9 647.9,219.8 640.1,221.8 632.4,223.8 624.8,225.9 617.3,228.1 609.9,230.3 602.5,232.6 595.3,235 588.2,237.4 581.2,239.9 574.3,242.5 567.6,245.1 561,247.7 554.4,250.5 548.1,253.3 541.8,256.1 535.8,259 529.8,262 524,265 518.4,268.1 512.9,271.2 507.6,274.4 502.4,277.6 497.5,280.9 492.7,284.3 488.1,287.7 483.7,291.1 479.5,294.6 475.4,298.1 471.6,301.7 468,305.3 464.6,309 461.5,312.7 458.5,316.5 455.8,320.3 453.3,324.1 451.1,328 449.1,331.9 447.3,335.8 445.9,339.7 444.6,343.7 443.7,347.7 442.9,351.8 442.5,355.8 442.4,359.9 442.5,363.9 442.9,368 443.6,372.1 444.6,376.2 445.9,380.3 447.5,384.5 449.4,388.6 451.6,392.7 454.1,396.8 456.9,400.8 460,404.9 463.4,408.9 467.2,413 471.3,417 475.7,420.9 480.4,424.9 485.4,428.8 490.8,432.6 496.4,436.4 502.4,440.2 508.7,443.9 515.4,447.5 522.3,451.1 529.5,454.6 537.1,458.1 544.9,461.5 553.1,464.8 561.5,468 570.3,471.1 579.3,474.2 588.6,477.2 598.2,480 608,482.8"/>
<polyline class="e" points="1025.9,196.9 1052,179.6"/>
<polyline class="e" points="608,482.8 554.9,520.1"/>
<polyline class="e" points="1052,179.6 1042.3,178.6 1032.6,177.7 1022.8,176.8 1013,176 1003.1,175.3 993.2,174.6 983.3,174 973.4,173.5 963.4,173.1 953.4,172.7 943.4,172.4 933.3,172.2 923.3,172 913.2,172 903.1,172 893,172 882.9,172.2 872.8,172.4 862.7,172.7 852.6,173.1 842.5,173.5 832.4,174 822.3,174.6 812.2,175.2 802.2,176 792.1,176.8 782.1,177.6 772.1,178.6 762.1,179.6 752.2,180.7 742.3,181.9 732.4,183.1 722.6,184.4 712.8,185.8 703.1,187.3 693.4,188.8 683.7,190.4 674.1,192.1 664.6,193.8 655.1,195.7 645.7,197.6 636.4,199.5 627.1,201.6 618,203.7 608.8,205.9 599.8,208.2 590.9,210.5 582.1,212.9 573.3,215.4 564.7,218 556.1,220.6 547.7,223.3 539.4,226.1 531.2,229 523.1,231.9 515.2,234.9 507.4,238 499.7,241.1 492.1,244.3 484.8,247.6 477.5,251 470.5,254.4 463.6,257.9 456.8,261.5 450.2,265.1 443.9,268.8 437.7,272.6 431.7,276.4 425.9,280.3 420.3,284.2 414.9,288.3 409.7,292.4 404.8,296.5 400,300.7 395.6,305 391.3,309.3 387.3,313.7 383.6,318.1 380.1,322.6 376.9,327.1 374,331.7 371.4,336.3 369,340.9 366.9,345.6 365.2,350.4 363.7,355.2 362.6,360 361.8,364.8 361.3,369.7 361.2,374.6 361.4,379.5 361.9,384.4 362.8,389.4 364,394.3 365.6,399.3 367.6,404.3 369.9,409.3 372.6,414.2 375.7,419.2 379.2,424.1 383.1,429.1 387.3,434 392,438.9 397,443.7 402.5,448.5 408.3,453.3 414.5,458 421.2,462.7 428.2,467.4 435.6,471.9 443.5,476.4 451.7,480.8 460.3,485.2 469.3,489.5 478.7,493.7 488.5,497.8 498.7,501.8 509.2,505.6 520.1,509.4 531.4,513.1 543,516.7 554.9,520.1"/>
<polygon points="681.8,498.8 693.4,500.6 705.3,502.4 717.3,504 729.4,505.5 741.7,506.8 754.2,508 766.8,509.1 779.5,510 792.2,510.8 805.1,511.5 818.1,512 831.1,512.3 844.2,512.6 857.3,512.6 870.4,512.6 883.5,512.4 896.7,512 909.8,511.5 922.8,510.9 935.9,510.1 948.8,509.2 961.7,508.1 974.5,506.9 987.3,505.5 999.8,504.1 1012.3,502.5 1024.7,500.7 1036.8,498.9 1048.9,496.9 1060.7,494.8 1072.4,492.6 1083.9,490.2 1095.2,487.8 1106.2,485.2 1117.1,482.5 1127.7,479.7 1138.1,476.9 1148.2,473.9 1158.1,470.8 1167.7,467.7 1177.1,464.5 1186.1,461.1 1194.9,457.8 1203.5,454.3 1211.7,450.8 1219.6,447.2 1227.3,443.5 1234.6,439.8 1241.7,436 1248.4,432.2 1254.8,428.4 1261,424.5 1266.8,420.5 1272.3,416.6 1277.5,412.6 1282.4,408.5 1287,404.5 1291.2,400.4 1295.2,396.3 1298.9,392.2 1302.2,388.1 1305.3,384 1308,379.9 1310.4,375.8 1312.6,371.7 1314.4,367.6 1316,363.5 1317.3,359.4 1318.3,355.4 1319,351.3 1319.4,347.3 1319.6,343.3 1319.5,339.3 1319.1,335.4 1318.4,331.4 1317.5,327.5 1316.4,323.7 1315,319.9 1313.3,316.1 1311.5,312.3 1309.3,308.6 1307,304.9 1304.4,301.3 1301.6,297.7 1298.6,294.2 1295.3,290.7 1291.9,287.3 1288.3,283.9 1284.4,280.5 1280.4,277.3 1276.1,274 1271.7,270.8 1267.1,267.7 1262.4,264.7 1257.4,261.6 1252.3,258.7 1247.1,255.8 1241.6,252.9 1236,250.2 1230.3,247.4 1224.4,244.8 1218.4,242.2 1212.2,239.6 1206,237.1 1199.5,234.7 1193,232.4 1186.3,230.1 1179.5,227.9 1172.6,225.7 1165.6,223.6 1158.5,221.5 1151.3,219.6 1144,217.6 1136.5,215.8 1129,214 1121.4,212.3 1113.7,210.6 1106,209 1098.1,207.5 1090.2,206.1 1082.2,204.7 1107.3,187.1 1116.5,188.6 1125.7,190.2 1134.8,191.9 1143.9,193.6 1152.8,195.4 1161.7,197.3 1170.5,199.3 1179.2,201.3 1187.8,203.4 1196.3,205.6 1204.6,207.9 1212.9,210.2 1221.1,212.6 1229.1,215.1 1237.1,217.7 1244.9,220.3 1252.5,223 1260.1,225.8 1267.5,228.6 1274.7,231.6 1281.8,234.5 1288.8,237.6 1295.6,240.7 1302.2,244 1308.7,247.2 1315,250.6 1321.1,254 1327,257.5 1332.8,261 1338.3,264.7 1343.7,268.4 1348.8,272.1 1353.8,276 1358.5,279.8 1363,283.8 1367.2,287.8 1371.3,291.9 1375.1,296 1378.6,300.2 1381.9,304.5 1384.9,308.8 1387.7,313.2 1390.2,317.6 1392.4,322.1 1394.4,326.6 1396,331.2 1397.4,335.8 1398.4,340.4 1399.2,345.1 1399.6,349.9 1399.7,354.6 1399.5,359.5 1399,364.3 1398.1,369.2 1396.9,374.1 1395.3,379 1393.4,383.9 1391.2,388.9 1388.6,393.8 1385.6,398.8 1382.2,403.8 1378.5,408.7 1374.4,413.7 1369.9,418.7 1365.1,423.6 1359.8,428.5 1354.2,433.5 1348.2,438.4 1341.8,443.2 1335,448 1327.9,452.8 1320.3,457.6 1312.4,462.2 1304.1,466.9 1295.4,471.5 1286.3,476 1276.8,480.4 1267,484.8 1256.8,489 1246.2,493.2 1235.3,497.3 1224,501.4 1212.4,505.3 1200.5,509.1 1188.2,512.7 1175.6,516.3 1162.7,519.7 1149.5,523.1 1136,526.2 1122.3,529.3 1108.3,532.2 1094,534.9 1079.5,537.5 1064.8,540 1049.8,542.3 1034.7,544.4 1019.4,546.4 1003.9,548.2 988.3,549.8 972.6,551.3 956.8,552.5 940.8,553.6 924.8,554.5 908.8,555.3 892.7,555.8 876.6,556.2 860.5,556.4 844.4,556.3 828.3,556.2 812.3,555.8 796.4,555.2 780.5,554.5 764.8,553.5 749.2,552.4 733.7,551.2 718.4,549.7 703.3,548.1 688.4,546.3 673.7,544.3 659.2,542.1 644.9,539.8 630.9,537.4" fill="#8f8f8f"/>
<polyline class="d" points="688.5,499.8 646,540"/>
<polyline class="d" points="736.4,506.2 704.4,548.2"/>
<polyline class="d" points="786.7,510.5 765.9,553.6"/>
<polyline class="d" points="838.4,512.5 829.3,556.2"/>
<polyline class="d" points="890.8,512.2 893.6,555.8"/>
<polyline class="d" points="943,509.6 957.6,552.5"/>
<polyline class="d" points="994.1,504.8 1020.1,546.3"/>
<polyline class="d" points="1043.4,497.8 1080.1,537.4"/>
<polyline class="d" points="1089.9,488.9 1136.5,526.1"/>
<polyline class="d" points="1133.2,478.2 1188.6,512.6"/>
<polyline class="d" points="1172.6,466 1235.6,497.2"/>
<polyline class="d" points="1207.8,452.5 1277,480.3"/>
<polyline class="d" points="1238.3,437.9 1312.5,462.2"/>
<polyline class="d" points="1264,422.5 1341.9,443.2"/>
<polyline class="d" points="1284.7,406.5 1365.1,423.6"/>
<polyline class="d" points="1300.6,390.2 1382.2,403.8"/>
<polyline class="d" points="1311.5,373.8 1393.4,383.9"/>
<polyline class="d" points="1317.8,357.4 1399,364.3"/>
<polyline class="d" points="1319.6,341.4 1399.2,345.2"/>
<polyline class="d" points="1317,325.7 1394.4,326.7"/>
<polyline class="d" points="1310.5,310.6 1385,308.9"/>
<polyline class="d" points="1300.2,296.1 1371.4,292"/>
<polyline class="d" points="1286.5,282.3 1353.9,276.1"/>
<polyline class="d" points="1269.6,269.4 1333,261.2"/>
<polyline class="d" points="1249.9,257.4 1309,247.4"/>
<polyline class="d" points="1227.7,246.2 1282.2,234.7"/>
<polyline class="d" points="1203.1,236.1 1253,223.2"/>
<polyline class="d" points="1176.5,226.9 1221.6,212.8"/>
<polyline class="d" points="1148.1,218.7 1188.4,203.6"/>
<polyline class="d" points="1118.1,211.6 1153.5,195.6"/>
<polyline class="d" points="1086.8,205.5 1117.3,188.7"/>
<polyline class="e" points="681.8,498.8 693.4,500.6 705.3,502.4 717.3,504 729.4,505.5 741.7,506.8 754.2,508 766.8,509.1 779.5,510 792.2,510.8 805.1,511.5 818.1,512 831.1,512.3 844.2,512.6 857.3,512.6 870.4,512.6 883.5,512.4 896.7,512 909.8,511.5 922.8,510.9 935.9,510.1 948.8,509.2 961.7,508.1 974.5,506.9 987.3,505.5 999.8,504.1 1012.3,502.5 1024.7,500.7 1036.8,498.9 1048.9,496.9 1060.7,494.8 1072.4,492.6 1083.9,490.2 1095.2,487.8 1106.2,485.2 1117.1,482.5 1127.7,479.7 1138.1,476.9 1148.2,473.9 1158.1,470.8 1167.7,467.7 1177.1,464.5 1186.1,461.1 1194.9,457.8 1203.5,454.3 1211.7,450.8 1219.6,447.2 1227.3,443.5 1234.6,439.8 1241.7,436 1248.4,432.2 1254.8,428.4 1261,424.5 1266.8,420.5 1272.3,416.6 1277.5,412.6 1282.4,408.5 1287,404.5 1291.2,400.4 1295.2,396.3 1298.9,392.2 1302.2,388.1 1305.3,384 1308,379.9 1310.4,375.8 1312.6,371.7 1314.4,367.6 1316,363.5 1317.3,359.4 1318.3,355.4 1319,351.3 1319.4,347.3 1319.6,343.3 1319.5,339.3 1319.1,335.4 1318.4,331.4 1317.5,327.5 1316.4,323.7 1315,319.9 1313.3,316.1 1311.5,312.3 1309.3,308.6 1307,304.9 1304.4,301.3 1301.6,297.7 1298.6,294.2 1295.3,290.7 1291.9,287.3 1288.3,283.9 1284.4,280.5 1280.4,277.3 1276.1,274 1271.7,270.8 1267.1,267.7 1262.4,264.7 1257.4,261.6 1252.3,258.7 1247.1,255.8 1241.6,252.9 1236,250.2 1230.3,247.4 1224.4,244.8 1218.4,242.2 1212.2,239.6 1206,237.1 1199.5,234.7 1193,232.4 1186.3,230.1 1179.5,227.9 1172.6,225.7 1165.6,223.6 1158.5,221.5 1151.3,219.6 1144,217.6 1136.5,215.8 1129,214 1121.4,212.3 1113.7,210.6 1106,209 1098.1,207.5 1090.2,206.1 1082.2,204.7"/>
<polyline class="e" points="681.8,498.8 630.9,537.4"/>
<polyline class="e" points="1082.2,204.7 1107.3,187.1"/>
<polyline class="e" points="630.9,537.4 644.9,539.8 659.2,542.1 673.7,544.3 688.4,546.3 703.3,548.1 718.4,549.7 733.7,551.2 749.2,552.4 764.8,553.5 780.5,554.5 796.4,555.2 812.3,555.8 828.3,556.2 844.4,556.3 860.5,556.4 876.6,556.2 892.7,555.8 908.8,555.3 924.8,554.5 940.8,553.6 956.8,552.5 972.6,551.3 988.3,549.8 1003.9,548.2 1019.4,546.4 1034.7,544.4 1049.8,542.3 1064.8,540 1079.5,537.5 1094,534.9 1108.3,532.2 1122.3,529.3 1136,526.2 1149.5,523.1 1162.7,519.7 1175.6,516.3 1188.2,512.7 1200.5,509.1 1212.4,505.3 1224,501.4 1235.3,497.3 1246.2,493.2 1256.8,489 1267,484.8 1276.8,480.4 1286.3,476 1295.4,471.5 1304.1,466.9 1312.4,462.2 1320.3,457.6 1327.9,452.8 1335,448 1341.8,443.2 1348.2,438.4 1354.2,433.5 1359.8,428.5 1365.1,423.6 1369.9,418.7 1374.4,413.7 1378.5,408.7 1382.2,403.8 1385.6,398.8 1388.6,393.8 1391.2,388.9 1393.4,383.9 1395.3,379 1396.9,374.1 1398.1,369.2 1399,364.3 1399.5,359.5 1399.7,354.6 1399.6,349.9 1399.2,345.1 1398.4,340.4 1397.4,335.8 1396,331.2 1394.4,326.6 1392.4,322.1 1390.2,317.6 1387.7,313.2 1384.9,308.8 1381.9,304.5 1378.6,300.2 1375.1,296 1371.3,291.9 1367.2,287.8 1363,283.8 1358.5,279.8 1353.8,276 1348.8,272.1 1343.7,268.4 1338.3,264.7 1332.8,261 1327,257.5 1321.1,254 1315,250.6 1308.7,247.2 1302.2,244 1295.6,240.7 1288.8,237.6 1281.8,234.5 1274.7,231.6 1267.5,228.6 1260.1,225.8 1252.5,223 1244.9,220.3 1237.1,217.7 1229.1,215.1 1221.1,212.6 1212.9,210.2 1204.6,207.9 1196.3,205.6 1187.8,203.4 1179.2,201.3 1170.5,199.3 1161.7,197.3 1152.8,195.4 1143.9,193.6 1134.8,191.9 1125.7,190.2 1116.5,188.6 1107.3,187.1"/>
<polygon points="405.6,548.8 474.2,589.1 484.9,672.6 429.8,682.8 417.7,648.3" fill="#8f8f8f"/>
<polygon points="410,553.2 437.4,573.8 414.1,577.4" fill="#888888"/>
<polyline class="d" points="410.9,559.5 420.4,558.6"/>
<polyline class="d" points="412.7,568 427.5,566.2"/>
<polyline class="d" points="414.5,576.1 435.6,572.5"/>
<polyline class="e" points="474.2,591.8 484.9,672.6 429.8,682.8"/>
<polygon points="478.2,594.5 541.4,610.7 568.3,631.7 614.1,599.9 628.9,743.9 494.3,707.5" fill="#8f8f8f"/>
<polygon points="475,594.5 480.1,596.7 494.3,707.5 491.9,702.2" fill="#666666"/>
<polyline class="e" points="480.1,596.7 494.3,707.5 628.9,743.9"/>
<polyline class="e" points="475,594.5 491.9,702.2 494.3,707.5"/>
<polygon points="688.6,654.2 838.5,662.2 844.7,803 697.5,763.1" fill="#8f8f8f"/>
<polygon points="838.5,662.2 916,662.2 917.8,787.4 844.7,803" fill="url(#gf2)"/>
<polyline class="e" points="688.6,658.2 697.5,763.1 844.7,803 917.8,787.4"/>
<polyline class="e" points="838.5,671.1 844.7,803"/>
<polygon points="914.2,669 940,669 940,792 931.5,790.2 924.7,777.9 925.4,801.6 917.2,788.7" fill="#626262"/>
<polygon points="931.5,790.2 940,790 940,822 936.9,821.7 933,814.6 931.5,800.9" fill="#646464"/>
<polygon points="924.7,777.9 931.5,790.2 931.5,800.9 925.4,801.6" fill="#8f8f8f"/>
<polyline class="e" points="914.2,671 917.2,788.7 925.4,801.6 931.5,800.9 933,814.6 936.9,821.7"/>
<polyline class="e" points="925.4,801.6 924.7,777.9 931.5,790.2 931.5,800.9"/>
<ellipse cx="926.3" cy="691.5" rx="2.9" ry="7.2" fill="#8e8e8e" stroke="#2c2c2c" stroke-width="1.5"/>
<ellipse cx="927.2" cy="751.5" rx="2.9" ry="7.2" fill="#8e8e8e" stroke="#2c2c2c" stroke-width="1.5"/>
<polyline class="d" points="922.5,672 927,700 927.5,745 924.8,777"/>
<polygon points="1079.1,591.7 1116.8,591.7 1116.8,706.1 1111.9,706.1 1079.1,663.6" fill="#5e5e5e"/>
<polygon points="1086.1,592.2 1097.9,593.4 1107.2,601.7 1108.2,619.4" fill="#9a9a9a"/>
<polygon points="1107.8,602.9 1113.1,611.6 1115.1,623 1108.2,619.8" fill="#2d2d2d"/>
<polygon points="1096.6,690.5 1111.9,706.1 1110.8,760.4 1096.6,745.6" fill="#585858"/>
<polygon points="1111.9,702.6 1135.6,699.9 1134.3,784.7 1131.6,787.4 1120.3,772.6 1120.3,749.7 1111.9,745.6" fill="#626262"/>
<polygon points="1110.8,745.6 1120.3,749.7 1120.3,761.8 1110.8,760.4" fill="#8f8f8f"/>
<polyline class="e" points="1079.1,591.7 1079.1,663.6 1111.9,706.1"/>
<polyline class="e" points="1096.6,683.8 1096.6,745.6 1110.8,760.4 1120.3,761.8"/>
<polyline class="e" points="1120.3,749.7 1120.3,772.6 1131.6,787.4"/>
<polyline class="e" points="1086.1,592.2 1108.2,619.4"/>
<polyline class="d" points="1080.4,593.6 1111.9,705.3"/>
<polyline class="d" points="1113,710.7 1116.8,721.4 1111.9,745.6"/>
<ellipse cx="1096.9" cy="658.5" rx="4.1" ry="9.3" fill="#8e8e8e" stroke="#2c2c2c" stroke-width="1.5"/>
<ellipse cx="1117" cy="715.1" rx="3.4" ry="7.6" fill="#8e8e8e" stroke="#2c2c2c" stroke-width="1.5"/>
<polygon points="1238.7,580.7 1346.4,524.2 1344.2,544.4 1233.4,722.8" fill="#636363"/>
<polygon points="1193,602.2 1240.1,602.2 1233.4,722.8 1194.3,730.8" fill="#929292"/>
<polyline class="e" points="1240.1,603.6 1233.4,722.8 1194.3,730.8"/>
<polyline class="e" points="1344.2,544.4 1233.4,722.8"/>
<clipPath id="cw"><polygon points="361.8,383.9 362.6,388.7 363.8,393.5 365.3,398.3 367.1,403.2 369.3,408 371.8,412.8 374.7,417.7 378,422.5 381.6,427.3 385.6,432 389.9,436.8 394.7,441.5 399.8,446.2 405.3,450.9 411.1,455.5 417.3,460.1 424,464.6 430.9,469.1 438.3,473.5 446,477.8 454.1,482.1 462.6,486.3 471.5,490.4 480.7,494.5 490.3,498.5 500.2,502.3 510.5,506.1 521.1,509.8 532,513.3 543.3,516.8 554.9,520.1 568.5,632.4 557.4,628.9 546.7,625.3 536.3,621.6 526.2,617.8 516.4,613.8 506.9,609.7 497.8,605.6 488.9,601.4 480.4,597 472.3,592.6 464.4,588.1 456.9,583.6 449.8,578.9 443,574.2 436.5,569.5 430.4,564.7 424.6,559.8 419.2,554.9 414.1,550 412.7,548.9 411.6,548.6 410.7,549.2 410.1,550.6 409.8,552.8 409.9,555.5 410.3,558.8 430.6,684.8 426.2,679.1 422.2,673.3 418.5,667.5 415.1,661.7 412.1,655.8 409.5,650 407.2,644.1 405.2,638.2 403.5,632.4 402.2,626.5 401.2,620.7"/><polygon points="630.9,537.4 644.7,539.8 658.7,542.1 673,544.2 687.5,546.1 702.2,547.9 717.1,549.6 732.1,551 747.4,552.3 762.7,553.4 778.2,554.3 793.8,555.1 809.5,555.7 825.2,556.1 841,556.3 856.9,556.4 872.8,556.2 888.6,555.9 904.5,555.4 920.3,554.8 936.1,553.9 951.8,552.9 967.5,551.7 983,550.3 998.4,548.8 1013.7,547.1 1028.8,545.2 1043.8,543.2 1058.6,541 1073.2,538.6 1087.6,536.1 1101.7,533.5 1115.7,530.7 1129.3,527.7 1142.8,524.7 1155.9,521.5 1168.8,518.2 1181.3,514.7 1193.6,511.1 1205.6,507.5 1217.2,503.7 1228.5,499.8 1239.5,495.8 1250.1,491.7 1260.4,487.6 1270.3,483.3 1279.9,479 1289.1,474.6 1297.9,470.1 1306.4,465.6 1314.5,461 1322.2,456.4 1329.6,451.7 1336.5,447 1343.1,442.2 1349.4,437.4 1355.2,432.6 1360.7,427.8 1365.8,422.9 1370.5,418 1374.9,413.2 1378.9,408.3 1382.5,403.4 1385.8,398.5 1388.7,393.6 1391.3,388.7 1393.5,383.8 1395.3,378.9 1396.9,374.1 1398.1,369.3 1398.9,364.5 1399.5,359.7 1389.3,458.5 1388.7,463.9 1387.7,469.4 1386.4,474.9 1384.7,480.4 1382.7,485.9 1380.3,491.5 1377.5,497 1374.4,502.6 1370.8,508.2 1366.9,513.7 1362.6,519.3 1357.9,524.8 1352.9,530.4 1347.4,535.9 1341.5,541.3 1335.3,546.8 1328.6,552.2 1321.6,557.5 1314.1,562.9 1306.3,568.1 1298.1,573.3 1289.4,578.4 1280.4,583.5 1271,588.4 1261.3,593.3 1251.1,598.1 1240.6,602.8 1229.7,607.4 1218.4,611.8 1214.8,613.7 1211.2,616.4 1207.9,619.8 1205.1,623.8 1202.9,628 1201.4,632.5 1200.8,636.8 1193.6,766.4 1181.9,771 1170,775.4 1157.8,779.6 1145.3,783.7 1132.5,787.7 1135.7,704.4 1113.2,709.3 1116,620.9 1115.5,614 1113.6,607.8 1110.4,602.3 1105.9,597.8 1100.3,594.5 1093.9,592.4 1086.7,591.8 1079.2,592.5 1071.6,594.5 1064.2,597.9 1057.3,602.4 1051.3,607.9 1046.3,614.2 1042.5,621.1 1040.2,628.2 1039.3,635.4 1038.5,724.6 1015.3,729.1 1014.9,813.5 999.9,815.6 984.8,817.6 969.5,819.3 954.2,820.7 938.7,822 936.2,685.9 935.7,682.2 934.2,678.8 931.7,675.7 928.6,673.2 924.8,671.4 920.6,670.4 916.1,670.2 903.8,670.7 891.4,671.1 878.9,671.4 866.5,671.5 854.1,671.6 841.8,671.5 829.4,671.2 817.1,670.9 804.8,670.4 792.6,669.8 780.4,669.1 768.3,668.2 756.3,667.3 744.4,666.2 732.6,665 720.9,663.6 709.2,662.2 697.7,660.6 686.4,658.9 675.1,657.1 664,655.2 653.1,653.2 642.3,651.1"/></clipPath>
<g clip-path="url(#cw)">
<polygon points="401.9,624.6 402.1,626.1 362,385.1 361.8,383.9" fill="#6d6d6d"/>
<polygon points="401.9,625 403.2,632 362.9,390.1 361.9,384.2" fill="#6e6e6e"/>
<polygon points="403,630.9 404.6,637.9 364.2,395 362.7,389.2" fill="#6f6f6f"/>
<polygon points="404.3,636.9 406.4,643.9 365.8,400 363.9,394.1" fill="#707070"/>
<polygon points="406,642.8 408.5,649.8 367.9,404.9 365.5,399.1" fill="#727272"/>
<polygon points="408.1,648.8 410.9,655.8 370.2,409.9 367.5,404.1" fill="#737373"/>
<polygon points="410.4,654.7 413.7,661.7 373,414.9 369.8,409" fill="#747474"/>
<polygon points="413.2,660.7 416.9,667.6 376.1,419.8 372.5,414" fill="#757575"/>
<polygon points="416.3,666.6 420.4,673.5 379.7,424.8 375.6,418.9" fill="#767676"/>
<polygon points="419.7,672.5 424.2,679.4 383.6,429.7 379,423.9" fill="#777777"/>
<polygon points="423.5,678.4 428.4,685.2 387.9,434.6 382.9,428.8" fill="#787878"/>
<polygon points="427.7,684.2 433,691 392.6,439.5 387.1,433.7" fill="#797979"/>
<polygon points="432.2,690 438,696.8 397.6,444.3 391.7,438.6" fill="#7a7a7a"/>
<polygon points="437.1,695.8 443.3,702.5 403.1,449.1 396.7,443.4" fill="#7a7a7a"/>
<polygon points="442.3,701.5 448.9,708.2 409,453.9 402.1,448.2" fill="#7b7b7b"/>
<polygon points="447.9,707.2 455,713.8 415.3,458.6 407.9,453" fill="#7c7c7c"/>
<polygon points="453.9,712.8 461.4,719.3 422,463.3 414.1,457.8" fill="#7c7c7c"/>
<polygon points="460.2,718.4 468.2,724.8 429,467.9 420.7,462.4" fill="#7d7d7d"/>
<polygon points="466.9,723.9 475.3,730.2 436.5,472.4 427.7,467.1" fill="#7d7d7d"/>
<polygon points="474,729.3 482.8,735.5 444.4,476.9 435.1,471.6" fill="#7e7e7e"/>
<polygon points="481.4,734.6 490.6,740.8 452.6,481.3 442.9,476.1" fill="#7f7f7f"/>
<polygon points="489.2,739.8 498.9,745.9 461.3,485.7 451.1,480.6" fill="#808080"/>
<polygon points="497.4,745 507.4,750.9 470.3,489.9 459.7,484.9" fill="#818181"/>
<polygon points="505.9,750.1 516.3,755.9 479.8,494.1 468.7,489.2" fill="#828282"/>
<polygon points="514.7,755 525.6,760.7 489.6,498.2 478.1,493.4" fill="#838383"/>
<polygon points="523.9,759.8 535.2,765.4 499.8,502.2 487.8,497.5" fill="#858585"/>
<polygon points="533.5,764.6 545.1,770 510.3,506 497.9,501.5" fill="#878787"/>
<polygon points="543.4,769.2 555.4,774.4 521.2,509.8 508.4,505.4" fill="#898989"/>
<polygon points="553.6,773.6 566,778.7 532.5,513.5 519.3,509.1" fill="#8a8a8a"/>
<polygon points="564.1,778 576.9,782.9 544.1,517 530.5,512.8" fill="#8b8b8b"/>
<polygon points="574.9,782.1 587,786.5 554.9,520.1 542,516.4" fill="#8c8c8c"/>
<polygon points="586.1,786.2 587,786.5 554.9,520.1 553.9,519.8" fill="#8d8d8d"/>
<polyline class="d" points="403,630.9 362.7,389.2"/>
<polyline class="d" points="410.4,654.7 369.8,409"/>
<polyline class="d" points="423.5,678.4 382.9,428.8"/>
<polyline class="d" points="442.3,701.5 402.1,448.2"/>
<polyline class="d" points="466.9,723.9 427.7,467.1"/>
<polyline class="d" points="497.4,745 459.7,484.9"/>
<polyline class="d" points="533.5,764.6 497.9,501.5"/>
<polyline class="d" points="574.9,782.1 542,516.4"/>
<polygon points="657.9,806.8 661.3,807.6 634.5,538 630.9,537.4" fill="#929292"/>
<polygon points="659,807.1 674.4,810.4 648.5,540.4 632,537.6" fill="#939393"/>
<polygon points="672,809.9 687.7,813.1 662.8,542.7 646,540" fill="#939393"/>
<polygon points="685.3,812.6 701.2,815.5 677.4,544.8 660.3,542.3" fill="#939393"/>
<polygon points="698.8,815.1 714.9,817.8 692.1,546.7 674.8,544.4" fill="#949494"/>
<polygon points="712.4,817.4 728.8,819.9 707.1,548.5 689.5,546.4" fill="#949494"/>
<polygon points="726.3,819.5 742.8,821.7 722.2,550.1 704.4,548.2" fill="#959595"/>
<polygon points="740.3,821.4 757.1,823.4 737.6,551.5 719.5,549.8" fill="#959595"/>
<polygon points="754.5,823.1 771.4,824.9 753,552.7 734.8,551.3" fill="#959595"/>
<polygon points="768.9,824.6 785.9,826.1 768.7,553.8 750.3,552.5" fill="#959595"/>
<polygon points="783.3,825.9 800.5,827.1 784.4,554.7 765.9,553.6" fill="#959595"/>
<polygon points="797.9,827 815.2,827.9 800.2,555.4 781.6,554.5" fill="#969696"/>
<polygon points="812.5,827.8 829.9,828.6 816.2,555.9 797.4,555.3" fill="#969696"/>
<polygon points="827.3,828.5 844.7,828.9 832.2,556.2 813.3,555.8" fill="#969696"/>
<polygon points="842.1,828.9 859.6,829.1 848.2,556.4 829.3,556.2" fill="#969696"/>
<polygon points="856.9,829.1 874.5,829.1 864.3,556.3 845.4,556.4" fill="#969696"/>
<polygon points="871.8,829.1 889.4,828.8 880.4,556.1 861.4,556.3" fill="#969696"/>
<polygon points="886.7,828.9 904.2,828.3 896.5,555.7 877.5,556.2" fill="#969696"/>
<polygon points="901.6,828.4 919.1,827.6 912.6,555.1 893.6,555.8" fill="#969696"/>
<polygon points="916.5,827.8 933.9,826.7 928.6,554.3 909.7,555.2" fill="#969696"/>
<polygon points="931.3,826.9 948.7,825.6 944.5,553.4 925.7,554.5" fill="#969696"/>
<polygon points="946.1,825.8 963.4,824.3 960.4,552.2 941.7,553.6" fill="#969696"/>
<polygon points="960.8,824.5 978,822.8 976.2,550.9 957.6,552.5" fill="#969696"/>
<polygon points="975.5,823 992.6,821 991.9,549.4 973.4,551.2" fill="#969696"/>
<polygon points="990,821.3 1007,819.1 1007.5,547.8 989.1,549.7" fill="#969696"/>
<polygon points="1004.4,819.4 1021.2,816.9 1022.9,546 1004.7,548.1" fill="#959595"/>
<polygon points="1018.7,817.3 1035.4,814.6 1038.1,544 1020.1,546.3" fill="#939393"/>
<polygon points="1032.9,815 1049.3,812 1053.2,541.8 1035.4,544.3" fill="#929292"/>
<polygon points="1046.8,812.5 1063.1,809.3 1068,539.5 1050.5,542.2" fill="#919191"/>
<polygon points="1060.7,809.8 1076.7,806.4 1082.7,537 1065.4,539.9" fill="#909090"/>
<polygon points="1074.3,806.9 1090.1,803.3 1097.1,534.4 1080.1,537.4" fill="#8e8e8e"/>
<polygon points="1087.7,803.9 1103.3,800 1111.3,531.6 1094.6,534.8" fill="#8d8d8d"/>
<polygon points="1101,800.6 1116.2,796.6 1125.3,528.6 1108.8,532.1" fill="#8b8b8b"/>
<polygon points="1114,797.2 1129,793 1138.9,525.6 1122.8,529.2" fill="#8a8a8a"/>
<polygon points="1126.7,793.6 1141.4,789.2 1152.4,522.4 1136.5,526.1" fill="#898989"/>
<polygon points="1139.2,789.9 1153.6,785.3 1165.5,519 1150,522.9" fill="#898989"/>
<polygon points="1151.5,786 1165.6,781.2 1178.3,515.6 1163.2,519.6" fill="#888888"/>
<polygon points="1163.5,782 1177.2,777 1190.8,512 1176,516.2" fill="#888888"/>
<polygon points="1175.2,777.8 1188.6,772.6 1203,508.3 1188.6,512.6" fill="#878787"/>
<polygon points="1186.6,773.4 1199.7,768.1 1214.9,504.5 1200.8,508.9" fill="#868686"/>
<polygon points="1197.7,768.9 1210.4,763.5 1226.4,500.5 1212.8,505.1" fill="#868686"/>
<polygon points="1208.6,764.3 1220.9,758.8 1237.6,496.5 1224.4,501.2" fill="#858585"/>
<polygon points="1219.1,759.6 1231,753.9 1248.4,492.4 1235.6,497.2" fill="#858585"/>
<polygon points="1229.3,754.8 1240.9,748.9 1258.9,488.2 1246.5,493.1" fill="#848484"/>
<polygon points="1239.1,749.8 1250.3,743.9 1269,483.9 1257,488.9" fill="#838383"/>
<polygon points="1248.7,744.8 1259.5,738.7 1278.7,479.5 1267.2,484.7" fill="#828282"/>
<polygon points="1257.9,739.6 1268.3,733.4 1288.1,475.1 1277,480.3" fill="#818181"/>
<polygon points="1266.8,734.4 1276.8,728.1 1297.1,470.6 1286.5,475.9" fill="#7e7e7e"/>
<polygon points="1275.3,729 1284.9,722.6 1305.7,466 1295.5,471.4" fill="#7b7b7b"/>
<polygon points="1283.5,723.6 1292.7,717.1 1314,461.3 1304.2,466.8" fill="#777777"/>
<polygon points="1291.3,718.1 1300.1,711.6 1321.8,456.7 1312.5,462.2" fill="#747474"/>
<polygon points="1298.8,712.5 1307.1,705.9 1329.3,451.9 1320.4,457.5" fill="#717171"/>
<polygon points="1305.9,706.9 1313.9,700.2 1336.4,447.1 1328,452.8" fill="#6f6f6f"/>
<polygon points="1312.7,701.2 1320.2,694.5 1343.1,442.3 1335.1,448" fill="#6d6d6d"/>
<polygon points="1319.1,695.5 1326.2,688.7 1349.4,437.4 1341.9,443.2" fill="#6c6c6c"/>
<polygon points="1325.2,689.7 1331.9,682.9 1355.3,432.6 1348.3,438.3" fill="#6b6b6b"/>
<polygon points="1330.9,683.9 1337.2,677 1360.8,427.6 1354.3,433.4" fill="#6a6a6a"/>
<polygon points="1336.3,678.1 1342.1,671.1 1366,422.7 1359.9,428.5" fill="#686868"/>
<polygon points="1341.3,672.2 1346.7,665.2 1370.8,417.8 1365.1,423.6" fill="#666666"/>
<polygon points="1345.9,666.3 1350.9,659.3 1375.2,412.8 1369.9,418.6" fill="#656565"/>
<polygon points="1350.2,660.4 1354.8,653.4 1379.2,407.8 1374.4,413.7" fill="#626262"/>
<polygon points="1354.2,654.4 1358.4,647.4 1382.8,402.9 1378.5,408.7" fill="#5f5f5f"/>
<polygon points="1357.8,648.5 1361.6,641.5 1386.1,397.9 1382.2,403.8" fill="#5d5d5d"/>
<polygon points="1361,642.5 1364.4,635.5 1389,392.9 1385.6,398.8" fill="#5b5b5b"/>
<polygon points="1364,636.6 1367,629.6 1391.6,388 1388.5,393.8" fill="#585858"/>
<polygon points="1366.5,630.7 1369.2,623.7 1393.8,383.1 1391.2,388.9" fill="#565656"/>
<polygon points="1368.8,624.7 1371,617.8 1395.6,378.1 1393.4,383.9" fill="#535353"/>
<polygon points="1370.7,618.8 1372.6,611.9 1397.1,373.2 1395.3,379" fill="#515151"/>
<polygon points="1372.3,612.9 1373.8,606 1398.3,368.3 1396.9,374.1" fill="#4e4e4e"/>
<polygon points="1373.6,607 1374.7,600.1 1399.1,363.5 1398.1,369.2" fill="#4b4b4b"/>
<polygon points="1374.5,601.2 1375.1,595.6 1399.5,359.7 1399,364.3" fill="#494949"/>
<polyline class="d" points="672,809.9 646,540"/>
<polyline class="d" points="726.3,819.5 704.4,548.2"/>
<polyline class="d" points="783.3,825.9 765.9,553.6"/>
<polyline class="d" points="842.1,828.9 829.3,556.2"/>
<polyline class="d" points="901.6,828.4 893.6,555.8"/>
<polyline class="d" points="960.8,824.5 957.6,552.5"/>
<polyline class="d" points="1018.7,817.3 1020.1,546.3"/>
<polyline class="d" points="1074.3,806.9 1080.1,537.4"/>
<polyline class="d" points="1126.7,793.6 1136.5,526.1"/>
<polyline class="d" points="1175.2,777.8 1188.6,512.6"/>
<polyline class="d" points="1219.1,759.6 1235.6,497.2"/>
<polyline class="d" points="1257.9,739.6 1277,480.3"/>
<polyline class="d" points="1291.3,718.1 1312.5,462.2"/>
<polyline class="d" points="1319.1,695.5 1341.9,443.2"/>
<polyline class="d" points="1341.3,672.2 1365.1,423.6"/>
<polyline class="d" points="1357.8,648.5 1382.2,403.8"/>
<polyline class="d" points="1368.8,624.7 1393.4,383.9"/>
<polyline class="d" points="1374.5,601.2 1399,364.3"/>
</g>
<polyline class="e" points="361.8,383.9 362.6,388.7 363.8,393.5 365.3,398.3 367.1,403.2 369.3,408 371.8,412.8 374.7,417.7 378,422.5 381.6,427.3 385.6,432 389.9,436.8 394.7,441.5 399.8,446.2 405.3,450.9 411.1,455.5 417.3,460.1 424,464.6 430.9,469.1 438.3,473.5 446,477.8 454.1,482.1 462.6,486.3 471.5,490.4 480.7,494.5 490.3,498.5 500.2,502.3 510.5,506.1 521.1,509.8 532,513.3 543.3,516.8 554.9,520.1 568.5,632.4 557.4,628.9 546.7,625.3 536.3,621.6 526.2,617.8 516.4,613.8 506.9,609.7 497.8,605.6 488.9,601.4 480.4,597 472.3,592.6 464.4,588.1 456.9,583.6 449.8,578.9 443,574.2 436.5,569.5 430.4,564.7 424.6,559.8 419.2,554.9 414.1,550 412.7,548.9 411.6,548.6 410.7,549.2 410.1,550.6 409.8,552.8 409.9,555.5 410.3,558.8 430.6,684.8 426.2,679.1 422.2,673.3 418.5,667.5 415.1,661.7 412.1,655.8 409.5,650 407.2,644.1 405.2,638.2 403.5,632.4 402.2,626.5 401.2,620.7 361.8,383.9"/>
<polyline class="e" points="630.9,537.4 644.7,539.8 658.7,542.1 673,544.2 687.5,546.1 702.2,547.9 717.1,549.6 732.1,551 747.4,552.3 762.7,553.4 778.2,554.3 793.8,555.1 809.5,555.7 825.2,556.1 841,556.3 856.9,556.4 872.8,556.2 888.6,555.9 904.5,555.4 920.3,554.8 936.1,553.9 951.8,552.9 967.5,551.7 983,550.3 998.4,548.8 1013.7,547.1 1028.8,545.2 1043.8,543.2 1058.6,541 1073.2,538.6 1087.6,536.1 1101.7,533.5 1115.7,530.7 1129.3,527.7 1142.8,524.7 1155.9,521.5 1168.8,518.2 1181.3,514.7 1193.6,511.1 1205.6,507.5 1217.2,503.7 1228.5,499.8 1239.5,495.8 1250.1,491.7 1260.4,487.6 1270.3,483.3 1279.9,479 1289.1,474.6 1297.9,470.1 1306.4,465.6 1314.5,461 1322.2,456.4 1329.6,451.7 1336.5,447 1343.1,442.2 1349.4,437.4 1355.2,432.6 1360.7,427.8 1365.8,422.9 1370.5,418 1374.9,413.2 1378.9,408.3 1382.5,403.4 1385.8,398.5 1388.7,393.6 1391.3,388.7 1393.5,383.8 1395.3,378.9 1396.9,374.1 1398.1,369.3 1398.9,364.5 1399.5,359.7 1389.3,458.5 1388.7,463.9 1387.7,469.4 1386.4,474.9 1384.7,480.4 1382.7,485.9 1380.3,491.5 1377.5,497 1374.4,502.6 1370.8,508.2 1366.9,513.7 1362.6,519.3 1357.9,524.8 1352.9,530.4 1347.4,535.9 1341.5,541.3 1335.3,546.8 1328.6,552.2 1321.6,557.5 1314.1,562.9 1306.3,568.1 1298.1,573.3 1289.4,578.4 1280.4,583.5 1271,588.4 1261.3,593.3 1251.1,598.1 1240.6,602.8 1229.7,607.4 1218.4,611.8 1214.8,613.7 1211.2,616.4 1207.9,619.8 1205.1,623.8 1202.9,628 1201.4,632.5 1200.8,636.8 1193.6,766.4 1181.9,771 1170,775.4 1157.8,779.6 1145.3,783.7 1132.5,787.7 1135.7,704.4 1113.2,709.3 1116,620.9 1115.5,614 1113.6,607.8 1110.4,602.3 1105.9,597.8 1100.3,594.5 1093.9,592.4 1086.7,591.8 1079.2,592.5 1071.6,594.5 1064.2,597.9 1057.3,602.4 1051.3,607.9 1046.3,614.2 1042.5,621.1 1040.2,628.2 1039.3,635.4 1038.5,724.6 1015.3,729.1 1014.9,813.5 999.9,815.6 984.8,817.6 969.5,819.3 954.2,820.7 938.7,822 936.2,685.9 935.7,682.2 934.2,678.8 931.7,675.7 928.6,673.2 924.8,671.4 920.6,670.4 916.1,670.2 903.8,670.7 891.4,671.1 878.9,671.4 866.5,671.5 854.1,671.6 841.8,671.5 829.4,671.2 817.1,670.9 804.8,670.4 792.6,669.8 780.4,669.1 768.3,668.2 756.3,667.3 744.4,666.2 732.6,665 720.9,663.6 709.2,662.2 697.7,660.6 686.4,658.9 675.1,657.1 664,655.2 653.1,653.2 642.3,651.1 630.9,537.4"/>
<polygon points="577.8,608 618.9,578.4 595.2,569.8 572.1,563" fill="#8f8f8f"/>
<polyline class="d" points="580.4,599.9 612.7,579.7"/>
<polyline class="d" points="577.8,591.8 603.3,574.3"/>
<polygon points="556.2,518.7 610,483.7 610.8,495 568.3,527.8 577.8,608 618.9,578.4 635.6,739.8 628.9,743.9 614.1,599.9 568.3,631.7" fill="#696969"/>
<polyline class="e" points="556.2,518.7 610,483.7 610.8,495 568.3,527.8 577.8,608 618.9,578.4 635.6,739.8 628.9,743.9 614.1,599.9 568.3,631.7 556.2,518.7"/>
<polygon points="1050.5,179.8 1052.1,262.6 1031.1,276.6 1030,393.2 1026.5,393.2 1027.6,267.3 1048.2,252.1 1047.5,195.5 1027.2,207.8 1027.2,196.9" fill="#696969"/>
<polyline class="e" points="1050.5,179.8 1052.1,262.6 1031.1,276.6 1030,393.2 1026.5,393.2 1027.6,267.3 1048.2,252.1 1047.5,195.5 1027.2,207.8 1027.2,196.9 1050.5,179.8"/>
</g>
<g font-family="Liberation Sans, sans-serif" font-size="9" font-weight="bold">
<line x1="30" y1="1070" x2="30" y2="1083" stroke="#2b7fc0" stroke-width="1"/>
<line x1="31" y1="1084" x2="45" y2="1086" stroke="#c0202a" stroke-width="1"/>
<line x1="30" y1="1084" x2="24" y2="1090" stroke="#e8e8e8" stroke-width="1"/>
<text x="27.5" y="1066" fill="#2b8fe0">z</text>
<text x="44" y="1086.5" fill="#d01c28">y</text>
<text x="19" y="1090.5" fill="#ffffff">x</text>
</g>
</svg>
<div id="shade"></div>
<div id="iso">Isolate : persp</div>
<div id="panel">
<div id="menu"><span style="left:14.2px">List</span><span style="left:53.4px">Selected</span><span style="left:121.2px;letter-spacing:-0.2px">Focus</span><span style="left:173.7px;letter-spacing:0.4px">Attributes</span><span style="left:248.7px;letter-spacing:0.15px">Display</span><span style="left:309.6px">Show</span><span style="left:360.5px;letter-spacing:0.3px">Help</span></div>
<svg style="position:absolute;left:489px;top:0" width="29" height="30" viewBox="0 0 29 30"><polygon points="17.2,5.9 21,9.9 15.6,17.5 10,11.8" fill="#b6b6b6" stroke="#b6b6b6" stroke-width="0.8" stroke-linejoin="round"/><polygon points="11.8,14.4 14.1,16.8 6,21.4" fill="#8c8c8c"/></svg>
<div id="msg">Select an object in the scene to view and edit its attributes</div>
</div>
</body></html>
